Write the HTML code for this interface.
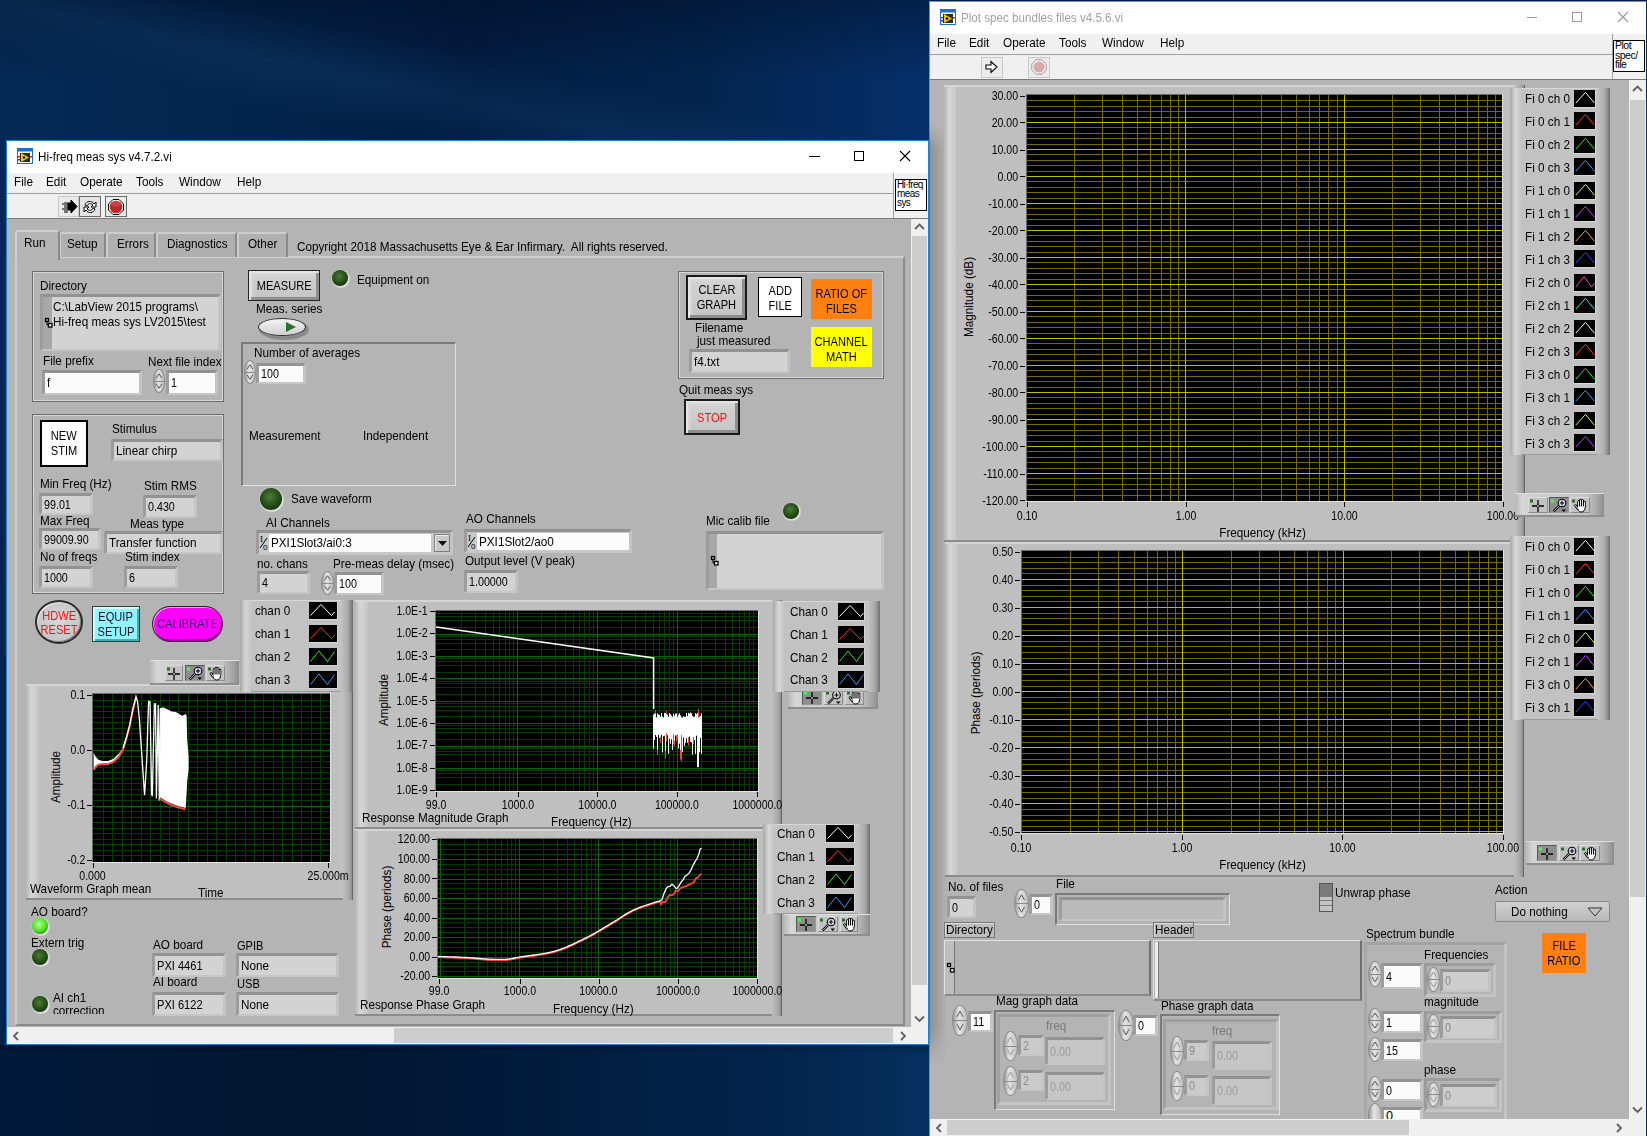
<!DOCTYPE html>
<html><head><meta charset="utf-8">
<style>
*{margin:0;padding:0;box-sizing:border-box}
html,body{width:1647px;height:1136px;overflow:hidden}
body{position:relative;font-family:"Liberation Sans",sans-serif;font-size:12px;color:#000;background:#022045}
.a{position:absolute}
.t{position:absolute;white-space:nowrap;line-height:14px;color:#000}
.num{position:absolute;background:#bcbcbc;border-style:solid;border-width:3px 3px 2px 3px;border-color:#929292 #c4c4c4 #c6c6c6 #9c9c9c}
</style></head><body>

<div class="a" style="left:0;top:0;width:1647px;height:1136px;background:#022148"></div>
<div class="a" style="left:0;top:0;width:930px;height:141px;background:linear-gradient(90deg,#042a56 0%,#03244c 30%,#021d42 50%,#03244e 75%,#05306a 100%)"></div>
<div class="a" style="left:0;top:0;width:930px;height:141px;background:linear-gradient(180deg,rgba(0,5,20,0.35) 0%,rgba(0,0,0,0) 55%)"></div>
<div class="a" style="left:0;top:0;width:930px;height:141px;background:linear-gradient(192deg,rgba(0,0,0,0) 45%,rgba(60,130,200,0.10) 59%,rgba(0,0,0,0) 73%)"></div>
<div class="a" style="left:0;top:141px;width:7px;height:904px;background:linear-gradient(180deg,#04285a,#02234a)"></div>
<div class="a" style="left:0;top:1045px;width:930px;height:91px;background:linear-gradient(90deg,#011a3a 0%,#011630 35%,#021c3e 60%,#03254e 85%,#05305f 100%)"></div>
<div class="a" style="left:0;top:1045px;width:930px;height:8px;background:linear-gradient(180deg,rgba(0,0,0,0.25),rgba(0,0,0,0))"></div>
<div class="a" style="left:929px;top:1px;width:718px;height:1135px;background:#f0f0f0;border-left:1px solid #8a8a8a;border-top:1px solid #8a8a8a"></div>
<div class="a" style="left:930px;top:2px;width:716px;height:32px;background:#fff"></div>
<div class="a" style="left:1646px;top:1px;width:1px;height:1135px;background:#0e2a4c"></div>
<svg class="a" style="left:940px;top:9px" width="16" height="16"><rect x="0.5" y="0.5" width="15" height="15" fill="#fff" stroke="#1a6fd0"/><rect x="0.5" y="0.5" width="15" height="3" fill="#1a6fd0"/><rect x="3" y="5" width="10" height="9" fill="#2a2a20"/><path d="M4,5 L12,9.5 L4,14 Z" fill="#f0d000"/><circle cx="7" cy="9.5" r="1.3" fill="#000"/><rect x="1" y="8" width="2" height="1.5" fill="#e02020"/><rect x="13" y="8" width="2" height="1.5" fill="#e02020"/><rect x="1" y="11" width="2" height="1.5" fill="#2040e0"/></svg>
<div class="t" style="left:961px;top:10.5px;font-size:12.5px;color:#a0a0a0;"><span style="display:inline-block;transform:scaleX(0.93);transform-origin:left">Plot spec bundles files v4.5.6.vi</span></div>
<div class="a" style="left:1527px;top:17px;width:10px;height:1px;background:#999"></div>
<div class="a" style="left:1572px;top:12px;width:10px;height:10px;border:1px solid #999"></div>
<svg class="a" style="left:1617px;top:11px" width="12" height="12"><path d="M1,1 L11,11 M11,1 L1,11" stroke="#999" stroke-width="1.1"/></svg>
<div class="a" style="left:930px;top:34px;width:716px;height:45px;background:#f0f0f0"></div>
<div class="t" style="left:937px;top:35.5px;font-size:12.8px;color:#000;"><span style="display:inline-block;transform:scaleX(0.92);transform-origin:left">File</span></div>
<div class="t" style="left:969px;top:35.5px;font-size:12.8px;color:#000;"><span style="display:inline-block;transform:scaleX(0.92);transform-origin:left">Edit</span></div>
<div class="t" style="left:1003px;top:35.5px;font-size:12.8px;color:#000;"><span style="display:inline-block;transform:scaleX(0.92);transform-origin:left">Operate</span></div>
<div class="t" style="left:1059px;top:35.5px;font-size:12.8px;color:#000;"><span style="display:inline-block;transform:scaleX(0.92);transform-origin:left">Tools</span></div>
<div class="t" style="left:1102px;top:35.5px;font-size:12.8px;color:#000;"><span style="display:inline-block;transform:scaleX(0.92);transform-origin:left">Window</span></div>
<div class="t" style="left:1160px;top:35.5px;font-size:12.8px;color:#000;"><span style="display:inline-block;transform:scaleX(0.92);transform-origin:left">Help</span></div>
<div class="a" style="left:930px;top:54px;width:682px;height:1px;background:#a0a0a0"></div>
<div class="a" style="left:1612px;top:34px;width:1px;height:45px;background:#a0a0a0"></div>
<div class="a" style="left:930px;top:79px;width:716px;height:1px;background:#7a7a7a"></div>
<div class="a" style="left:981px;top:57px;width:22px;height:21px;border:1px solid #c8c8c8;background:#ececec"></div>
<svg class="a" style="left:984px;top:59px" width="16" height="16"><path d="M2,6 H7 V2.5 L13,8 L7,13.5 V10 H2 Z" stroke="#000" stroke-width="1.1" fill="#fff"/></svg>
<div class="a" style="left:1028px;top:57px;width:22px;height:21px;border:1px solid #c8c8c8;background:#ececec"></div>
<svg class="a" style="left:1031px;top:59px" width="16" height="16"><path d="M5,0.8 H11 L15.2,5 V11 L11,15.2 H5 L0.8,11 V5 Z" fill="#f4f4f4" stroke="#9a9a9a"/><circle cx="8" cy="8" r="5.6" fill="#d8a8aa"/></svg>
<div class="a" style="left:1613px;top:40px;width:32px;height:32px;border:1px solid #000;background:#fff"></div>
<div class="a" style="left:1615px;top:41px;width:30px;font-family:Liberation Sans;font-size:10.5px;line-height:9.5px;letter-spacing:-0.5px;color:#000">Plot<br>spec/<br>file</div>
<div class="a" style="left:930px;top:80px;width:699px;height:1039px;background:#b4b4b4"></div>
<div class="a" style="left:1629px;top:80px;width:17px;height:1039px;background:#f0f0f0"></div>
<div class="a" style="left:1630px;top:100px;width:15px;height:797px;background:#cdcdcd"></div>
<svg class="a" style="left:1631px;top:84px" width="13" height="10"><path d="M2,7 L6.5,2.5 L11,7" stroke="#606060" stroke-width="1.8" fill="none"/></svg>
<svg class="a" style="left:1631px;top:1105px" width="13" height="10"><path d="M2,2.5 L6.5,7 L11,2.5" stroke="#606060" stroke-width="1.8" fill="none"/></svg>
<div class="a" style="left:930px;top:1119px;width:716px;height:17px;background:#f0f0f0"></div>
<div class="a" style="left:947px;top:1120px;width:462px;height:15px;background:#cdcdcd"></div>
<svg class="a" style="left:934px;top:1122px" width="10" height="12"><path d="M7,2 L3,6 L7,10" stroke="#606060" stroke-width="1.8" fill="none"/></svg>
<svg class="a" style="left:1614px;top:1122px" width="10" height="12"><path d="M3,2 L7,6 L3,10" stroke="#606060" stroke-width="1.8" fill="none"/></svg>
<div class="a" style="left:929px;top:125px;width:18px;height:940px;background:linear-gradient(90deg,rgba(0,0,0,0.22),rgba(0,0,0,0));-webkit-mask-image:linear-gradient(180deg,transparent 0,#000 25px,#000 calc(100% - 40px),transparent 100%)"></div>
<div class="a" style="left:944px;top:85px;width:581px;height:457px;background:#bfbfbf;border-top:2px solid #d4d4d4;border-bottom:2px solid #8c8c8c"></div>
<div class="a" style="left:944px;top:87px;width:13px;height:453px;background:linear-gradient(90deg,#b4b4b4,#d6d6d6 40%,#cdcdcd 75%,#c2c2c2 100%)"></div>
<div class="a" style="left:1515px;top:85px;width:10px;height:457px;background:linear-gradient(90deg,#bfbfbf,#a8a8a8 60%,#8e8e8e 90%,#3c3c3c 100%)"></div>
<svg class="a" style="left:1027px;top:95px" width="475" height="406" shape-rendering="crispEdges"><rect width="475" height="406" fill="#000"/><line x1="0" y1="5.5" x2="475" y2="5.5" stroke="#726c00"/><line x1="0" y1="11.5" x2="475" y2="11.5" stroke="#726c00"/><line x1="0" y1="16.5" x2="475" y2="16.5" stroke="#726c00"/><line x1="0" y1="22.5" x2="475" y2="22.5" stroke="#726c00"/><line x1="0" y1="32.5" x2="475" y2="32.5" stroke="#726c00"/><line x1="0" y1="38.5" x2="475" y2="38.5" stroke="#726c00"/><line x1="0" y1="43.5" x2="475" y2="43.5" stroke="#726c00"/><line x1="0" y1="49.5" x2="475" y2="49.5" stroke="#726c00"/><line x1="0" y1="59.5" x2="475" y2="59.5" stroke="#726c00"/><line x1="0" y1="65.5" x2="475" y2="65.5" stroke="#726c00"/><line x1="0" y1="70.5" x2="475" y2="70.5" stroke="#726c00"/><line x1="0" y1="76.5" x2="475" y2="76.5" stroke="#726c00"/><line x1="0" y1="86.5" x2="475" y2="86.5" stroke="#726c00"/><line x1="0" y1="92.5" x2="475" y2="92.5" stroke="#726c00"/><line x1="0" y1="97.5" x2="475" y2="97.5" stroke="#726c00"/><line x1="0" y1="103.5" x2="475" y2="103.5" stroke="#726c00"/><line x1="0" y1="113.5" x2="475" y2="113.5" stroke="#726c00"/><line x1="0" y1="119.5" x2="475" y2="119.5" stroke="#726c00"/><line x1="0" y1="124.5" x2="475" y2="124.5" stroke="#726c00"/><line x1="0" y1="130.5" x2="475" y2="130.5" stroke="#726c00"/><line x1="0" y1="140.5" x2="475" y2="140.5" stroke="#726c00"/><line x1="0" y1="146.5" x2="475" y2="146.5" stroke="#726c00"/><line x1="0" y1="151.5" x2="475" y2="151.5" stroke="#726c00"/><line x1="0" y1="157.5" x2="475" y2="157.5" stroke="#726c00"/><line x1="0" y1="167.5" x2="475" y2="167.5" stroke="#726c00"/><line x1="0" y1="173.5" x2="475" y2="173.5" stroke="#726c00"/><line x1="0" y1="178.5" x2="475" y2="178.5" stroke="#726c00"/><line x1="0" y1="184.5" x2="475" y2="184.5" stroke="#726c00"/><line x1="0" y1="194.5" x2="475" y2="194.5" stroke="#726c00"/><line x1="0" y1="200.5" x2="475" y2="200.5" stroke="#726c00"/><line x1="0" y1="205.5" x2="475" y2="205.5" stroke="#726c00"/><line x1="0" y1="211.5" x2="475" y2="211.5" stroke="#726c00"/><line x1="0" y1="221.5" x2="475" y2="221.5" stroke="#726c00"/><line x1="0" y1="227.5" x2="475" y2="227.5" stroke="#726c00"/><line x1="0" y1="232.5" x2="475" y2="232.5" stroke="#726c00"/><line x1="0" y1="238.5" x2="475" y2="238.5" stroke="#726c00"/><line x1="0" y1="248.5" x2="475" y2="248.5" stroke="#726c00"/><line x1="0" y1="254.5" x2="475" y2="254.5" stroke="#726c00"/><line x1="0" y1="259.5" x2="475" y2="259.5" stroke="#726c00"/><line x1="0" y1="265.5" x2="475" y2="265.5" stroke="#726c00"/><line x1="0" y1="275.5" x2="475" y2="275.5" stroke="#726c00"/><line x1="0" y1="281.5" x2="475" y2="281.5" stroke="#726c00"/><line x1="0" y1="286.5" x2="475" y2="286.5" stroke="#726c00"/><line x1="0" y1="292.5" x2="475" y2="292.5" stroke="#726c00"/><line x1="0" y1="302.5" x2="475" y2="302.5" stroke="#726c00"/><line x1="0" y1="308.5" x2="475" y2="308.5" stroke="#726c00"/><line x1="0" y1="313.5" x2="475" y2="313.5" stroke="#726c00"/><line x1="0" y1="319.5" x2="475" y2="319.5" stroke="#726c00"/><line x1="0" y1="329.5" x2="475" y2="329.5" stroke="#726c00"/><line x1="0" y1="335.5" x2="475" y2="335.5" stroke="#726c00"/><line x1="0" y1="340.5" x2="475" y2="340.5" stroke="#726c00"/><line x1="0" y1="346.5" x2="475" y2="346.5" stroke="#726c00"/><line x1="0" y1="356.5" x2="475" y2="356.5" stroke="#726c00"/><line x1="0" y1="362.5" x2="475" y2="362.5" stroke="#726c00"/><line x1="0" y1="367.5" x2="475" y2="367.5" stroke="#726c00"/><line x1="0" y1="373.5" x2="475" y2="373.5" stroke="#726c00"/><line x1="0" y1="383.5" x2="475" y2="383.5" stroke="#726c00"/><line x1="0" y1="389.5" x2="475" y2="389.5" stroke="#726c00"/><line x1="0" y1="394.5" x2="475" y2="394.5" stroke="#726c00"/><line x1="0" y1="400.5" x2="475" y2="400.5" stroke="#726c00"/><line x1="47.5" y1="0" x2="47.5" y2="406" stroke="#726c00"/><line x1="75.5" y1="0" x2="75.5" y2="406" stroke="#726c00"/><line x1="95.5" y1="0" x2="95.5" y2="406" stroke="#726c00"/><line x1="110.5" y1="0" x2="110.5" y2="406" stroke="#726c00"/><line x1="123.5" y1="0" x2="123.5" y2="406" stroke="#726c00"/><line x1="134.5" y1="0" x2="134.5" y2="406" stroke="#726c00"/><line x1="143.5" y1="0" x2="143.5" y2="406" stroke="#726c00"/><line x1="151.5" y1="0" x2="151.5" y2="406" stroke="#726c00"/><line x1="206.5" y1="0" x2="206.5" y2="406" stroke="#726c00"/><line x1="234.5" y1="0" x2="234.5" y2="406" stroke="#726c00"/><line x1="254.5" y1="0" x2="254.5" y2="406" stroke="#726c00"/><line x1="269.5" y1="0" x2="269.5" y2="406" stroke="#726c00"/><line x1="282.5" y1="0" x2="282.5" y2="406" stroke="#726c00"/><line x1="292.5" y1="0" x2="292.5" y2="406" stroke="#726c00"/><line x1="301.5" y1="0" x2="301.5" y2="406" stroke="#726c00"/><line x1="310.5" y1="0" x2="310.5" y2="406" stroke="#726c00"/><line x1="365.5" y1="0" x2="365.5" y2="406" stroke="#726c00"/><line x1="393.5" y1="0" x2="393.5" y2="406" stroke="#726c00"/><line x1="412.5" y1="0" x2="412.5" y2="406" stroke="#726c00"/><line x1="428.5" y1="0" x2="428.5" y2="406" stroke="#726c00"/><line x1="440.5" y1="0" x2="440.5" y2="406" stroke="#726c00"/><line x1="451.5" y1="0" x2="451.5" y2="406" stroke="#726c00"/><line x1="460.5" y1="0" x2="460.5" y2="406" stroke="#726c00"/><line x1="468.5" y1="0" x2="468.5" y2="406" stroke="#726c00"/><line x1="0" y1="27.5" x2="475" y2="27.5" stroke="#bebc00"/><line x1="0" y1="54.5" x2="475" y2="54.5" stroke="#bebc00"/><line x1="0" y1="81.5" x2="475" y2="81.5" stroke="#bebc00"/><line x1="0" y1="108.5" x2="475" y2="108.5" stroke="#bebc00"/><line x1="0" y1="135.5" x2="475" y2="135.5" stroke="#bebc00"/><line x1="0" y1="162.5" x2="475" y2="162.5" stroke="#bebc00"/><line x1="0" y1="189.5" x2="475" y2="189.5" stroke="#bebc00"/><line x1="0" y1="216.5" x2="475" y2="216.5" stroke="#bebc00"/><line x1="0" y1="243.5" x2="475" y2="243.5" stroke="#bebc00"/><line x1="0" y1="270.5" x2="475" y2="270.5" stroke="#bebc00"/><line x1="0" y1="297.5" x2="475" y2="297.5" stroke="#bebc00"/><line x1="0" y1="324.5" x2="475" y2="324.5" stroke="#bebc00"/><line x1="0" y1="351.5" x2="475" y2="351.5" stroke="#bebc00"/><line x1="0" y1="378.5" x2="475" y2="378.5" stroke="#bebc00"/><line x1="158.5" y1="0" x2="158.5" y2="406" stroke="#bebc00"/><line x1="317.5" y1="0" x2="317.5" y2="406" stroke="#bebc00"/></svg>
<div class="a" style="left:1026px;top:94px;width:476px;height:1px;background:#6a6a6a"></div>
<div class="a" style="left:1026px;top:94px;width:1px;height:407px;background:#6a6a6a"></div>
<div class="a" style="left:1026px;top:501px;width:477px;height:1px;background:#e4e4e4"></div>
<div class="a" style="left:1502px;top:94px;width:1px;height:408px;background:#e4e4e4"></div>
<div class="a" style="left:1020px;top:96px;width:5px;height:1px;background:#000"></div>
<div class="t" style="right:629px;top:88.5px;font-size:12.4px;color:#000;"><span style="display:inline-block;transform:scaleX(0.85);transform-origin:right">30.00</span></div>
<div class="a" style="left:1020px;top:122px;width:5px;height:1px;background:#000"></div>
<div class="t" style="right:629px;top:115.5px;font-size:12.4px;color:#000;"><span style="display:inline-block;transform:scaleX(0.85);transform-origin:right">20.00</span></div>
<div class="a" style="left:1020px;top:150px;width:5px;height:1px;background:#000"></div>
<div class="t" style="right:629px;top:142.5px;font-size:12.4px;color:#000;"><span style="display:inline-block;transform:scaleX(0.85);transform-origin:right">10.00</span></div>
<div class="a" style="left:1020px;top:176px;width:5px;height:1px;background:#000"></div>
<div class="t" style="right:629px;top:169.5px;font-size:12.4px;color:#000;"><span style="display:inline-block;transform:scaleX(0.85);transform-origin:right">0.00</span></div>
<div class="a" style="left:1020px;top:204px;width:5px;height:1px;background:#000"></div>
<div class="t" style="right:629px;top:196.5px;font-size:12.4px;color:#000;"><span style="display:inline-block;transform:scaleX(0.85);transform-origin:right">-10.00</span></div>
<div class="a" style="left:1020px;top:230px;width:5px;height:1px;background:#000"></div>
<div class="t" style="right:629px;top:223.5px;font-size:12.4px;color:#000;"><span style="display:inline-block;transform:scaleX(0.85);transform-origin:right">-20.00</span></div>
<div class="a" style="left:1020px;top:258px;width:5px;height:1px;background:#000"></div>
<div class="t" style="right:629px;top:250.5px;font-size:12.4px;color:#000;"><span style="display:inline-block;transform:scaleX(0.85);transform-origin:right">-30.00</span></div>
<div class="a" style="left:1020px;top:284px;width:5px;height:1px;background:#000"></div>
<div class="t" style="right:629px;top:277.5px;font-size:12.4px;color:#000;"><span style="display:inline-block;transform:scaleX(0.85);transform-origin:right">-40.00</span></div>
<div class="a" style="left:1020px;top:312px;width:5px;height:1px;background:#000"></div>
<div class="t" style="right:629px;top:304.5px;font-size:12.4px;color:#000;"><span style="display:inline-block;transform:scaleX(0.85);transform-origin:right">-50.00</span></div>
<div class="a" style="left:1020px;top:338px;width:5px;height:1px;background:#000"></div>
<div class="t" style="right:629px;top:331.5px;font-size:12.4px;color:#000;"><span style="display:inline-block;transform:scaleX(0.85);transform-origin:right">-60.00</span></div>
<div class="a" style="left:1020px;top:366px;width:5px;height:1px;background:#000"></div>
<div class="t" style="right:629px;top:358.5px;font-size:12.4px;color:#000;"><span style="display:inline-block;transform:scaleX(0.85);transform-origin:right">-70.00</span></div>
<div class="a" style="left:1020px;top:392px;width:5px;height:1px;background:#000"></div>
<div class="t" style="right:629px;top:385.5px;font-size:12.4px;color:#000;"><span style="display:inline-block;transform:scaleX(0.85);transform-origin:right">-80.00</span></div>
<div class="a" style="left:1020px;top:420px;width:5px;height:1px;background:#000"></div>
<div class="t" style="right:629px;top:412.5px;font-size:12.4px;color:#000;"><span style="display:inline-block;transform:scaleX(0.85);transform-origin:right">-90.00</span></div>
<div class="a" style="left:1020px;top:446px;width:5px;height:1px;background:#000"></div>
<div class="t" style="right:629px;top:439.5px;font-size:12.4px;color:#000;"><span style="display:inline-block;transform:scaleX(0.85);transform-origin:right">-100.00</span></div>
<div class="a" style="left:1020px;top:474px;width:5px;height:1px;background:#000"></div>
<div class="t" style="right:629px;top:466.5px;font-size:12.4px;color:#000;"><span style="display:inline-block;transform:scaleX(0.85);transform-origin:right">-110.00</span></div>
<div class="a" style="left:1020px;top:500px;width:5px;height:1px;background:#000"></div>
<div class="t" style="right:629px;top:493.5px;font-size:12.4px;color:#000;"><span style="display:inline-block;transform:scaleX(0.85);transform-origin:right">-120.00</span></div>
<div class="a" style="left:1027px;top:502px;width:1px;height:5px;background:#000"></div>
<div class="t" style="left:827.0px;width:400px;text-align:center;top:509.0px;font-size:12.4px;color:#000;"><span style="display:inline-block;transform:scaleX(0.85);transform-origin:center">0.10</span></div>
<div class="a" style="left:1186px;top:502px;width:1px;height:5px;background:#000"></div>
<div class="t" style="left:985.6666666666667px;width:400px;text-align:center;top:509.0px;font-size:12.4px;color:#000;"><span style="display:inline-block;transform:scaleX(0.85);transform-origin:center">1.00</span></div>
<div class="a" style="left:1344px;top:502px;width:1px;height:5px;background:#000"></div>
<div class="t" style="left:1144.3333333333333px;width:400px;text-align:center;top:509.0px;font-size:12.4px;color:#000;"><span style="display:inline-block;transform:scaleX(0.85);transform-origin:center">10.00</span></div>
<div class="a" style="left:1503px;top:502px;width:1px;height:5px;background:#000"></div>
<div class="t" style="left:1303.0px;width:400px;text-align:center;top:509.0px;font-size:12.4px;color:#000;"><span style="display:inline-block;transform:scaleX(0.85);transform-origin:center">100.00</span></div>
<div class="t" style="left:869px;top:290px;width:200px;text-align:center;font-size:12.6px;transform:rotate(-90deg) scaleX(0.93)">Magnitude (dB)</div>
<div class="t" style="left:1063px;width:400px;text-align:center;top:525.5px;font-size:12.6px;color:#000;"><span style="display:inline-block;transform:scaleX(0.93);transform-origin:center">Frequency (kHz)</span></div>
<div class="a" style="left:1510px;top:88px;width:100px;height:367px;background:#c2c2c2;border-top:1px solid #d8d8d8;border-bottom:1px solid #9a9a9a"></div>
<div class="a" style="left:1510px;top:88px;width:11px;height:367px;background:linear-gradient(90deg,#a8a8a8,#d6d6d6 50%,#c6c6c6)"></div>
<div class="a" style="left:1598px;top:88px;width:12px;height:367px;background:linear-gradient(90deg,#c2c2c2,#aaaaaa 55%,#8c8c8c 80%,#6e6e6e)"></div>
<div class="t" style="left:1525px;top:91.5px;font-size:12.6px;color:#000;"><span style="display:inline-block;transform:scaleX(0.93);transform-origin:left">Fi 0 ch 0</span></div>
<svg class="a" style="left:1574px;top:90px" width="22" height="18"><rect width="22" height="18" fill="#000"/><rect x="0" y="17" width="22" height="1" fill="#d8d8d8"/><rect x="21" y="0" width="1" height="18" fill="#d8d8d8"/><path d="M1.8,13.1 L11.5,2.4 L20.4,13.1" stroke="#fff" stroke-width="1" fill="none"/></svg>
<div class="t" style="left:1525px;top:114.5px;font-size:12.6px;color:#000;"><span style="display:inline-block;transform:scaleX(0.93);transform-origin:left">Fi 0 ch 1</span></div>
<svg class="a" style="left:1574px;top:112px" width="22" height="18"><rect width="22" height="18" fill="#000"/><rect x="0" y="17" width="22" height="1" fill="#d8d8d8"/><rect x="21" y="0" width="1" height="18" fill="#d8d8d8"/><path d="M1.8,13.1 L11.5,2.4 L20.4,13.1" stroke="#ff3030" stroke-width="1" fill="none"/></svg>
<div class="t" style="left:1525px;top:137.5px;font-size:12.6px;color:#000;"><span style="display:inline-block;transform:scaleX(0.93);transform-origin:left">Fi 0 ch 2</span></div>
<svg class="a" style="left:1574px;top:136px" width="22" height="18"><rect width="22" height="18" fill="#000"/><rect x="0" y="17" width="22" height="1" fill="#d8d8d8"/><rect x="21" y="0" width="1" height="18" fill="#d8d8d8"/><path d="M1.8,13.1 L11.5,2.4 L20.4,13.1" stroke="#20f020" stroke-width="1" fill="none"/></svg>
<div class="t" style="left:1525px;top:160.5px;font-size:12.6px;color:#000;"><span style="display:inline-block;transform:scaleX(0.93);transform-origin:left">Fi 0 ch 3</span></div>
<svg class="a" style="left:1574px;top:158px" width="22" height="18"><rect width="22" height="18" fill="#000"/><rect x="0" y="17" width="22" height="1" fill="#d8d8d8"/><rect x="21" y="0" width="1" height="18" fill="#d8d8d8"/><path d="M1.8,13.1 L11.5,2.4 L20.4,13.1" stroke="#30a0ff" stroke-width="1" fill="none"/></svg>
<div class="t" style="left:1525px;top:183.5px;font-size:12.6px;color:#000;"><span style="display:inline-block;transform:scaleX(0.93);transform-origin:left">Fi 1 ch 0</span></div>
<svg class="a" style="left:1574px;top:182px" width="22" height="18"><rect width="22" height="18" fill="#000"/><rect x="0" y="17" width="22" height="1" fill="#d8d8d8"/><rect x="21" y="0" width="1" height="18" fill="#d8d8d8"/><path d="M1.8,13.1 L11.5,2.4 L20.4,13.1" stroke="#c8ff40" stroke-width="1" fill="none"/></svg>
<div class="t" style="left:1525px;top:206.5px;font-size:12.6px;color:#000;"><span style="display:inline-block;transform:scaleX(0.93);transform-origin:left">Fi 1 ch 1</span></div>
<svg class="a" style="left:1574px;top:204px" width="22" height="18"><rect width="22" height="18" fill="#000"/><rect x="0" y="17" width="22" height="1" fill="#d8d8d8"/><rect x="21" y="0" width="1" height="18" fill="#d8d8d8"/><path d="M1.8,13.1 L11.5,2.4 L20.4,13.1" stroke="#c040ff" stroke-width="1" fill="none"/></svg>
<div class="t" style="left:1525px;top:229.5px;font-size:12.6px;color:#000;"><span style="display:inline-block;transform:scaleX(0.93);transform-origin:left">Fi 1 ch 2</span></div>
<svg class="a" style="left:1574px;top:228px" width="22" height="18"><rect width="22" height="18" fill="#000"/><rect x="0" y="17" width="22" height="1" fill="#d8d8d8"/><rect x="21" y="0" width="1" height="18" fill="#d8d8d8"/><path d="M1.8,13.1 L11.5,2.4 L20.4,13.1" stroke="#ffa020" stroke-width="1" fill="none"/></svg>
<div class="t" style="left:1525px;top:252.5px;font-size:12.6px;color:#000;"><span style="display:inline-block;transform:scaleX(0.93);transform-origin:left">Fi 1 ch 3</span></div>
<svg class="a" style="left:1574px;top:250px" width="22" height="18"><rect width="22" height="18" fill="#000"/><rect x="0" y="17" width="22" height="1" fill="#d8d8d8"/><rect x="21" y="0" width="1" height="18" fill="#d8d8d8"/><path d="M1.8,13.1 L11.5,2.4 L20.4,13.1" stroke="#3040ff" stroke-width="1" fill="none"/></svg>
<div class="t" style="left:1525px;top:275.5px;font-size:12.6px;color:#000;"><span style="display:inline-block;transform:scaleX(0.93);transform-origin:left">Fi 2 ch 0</span></div>
<svg class="a" style="left:1574px;top:274px" width="22" height="18"><rect width="22" height="18" fill="#000"/><rect x="0" y="17" width="22" height="1" fill="#d8d8d8"/><rect x="21" y="0" width="1" height="18" fill="#d8d8d8"/><path d="M1.8,13 L10,2.5 L17.5,13 L20.5,9" stroke="#ff30c0" stroke-width="1" fill="none"/></svg>
<div class="t" style="left:1525px;top:298.5px;font-size:12.6px;color:#000;"><span style="display:inline-block;transform:scaleX(0.93);transform-origin:left">Fi 2 ch 1</span></div>
<svg class="a" style="left:1574px;top:296px" width="22" height="18"><rect width="22" height="18" fill="#000"/><rect x="0" y="17" width="22" height="1" fill="#d8d8d8"/><rect x="21" y="0" width="1" height="18" fill="#d8d8d8"/><path d="M1.8,13.1 L11.5,2.4 L20.4,13.1" stroke="#30f0f0" stroke-width="1" fill="none"/></svg>
<div class="t" style="left:1525px;top:321.5px;font-size:12.6px;color:#000;"><span style="display:inline-block;transform:scaleX(0.93);transform-origin:left">Fi 2 ch 2</span></div>
<svg class="a" style="left:1574px;top:320px" width="22" height="18"><rect width="22" height="18" fill="#000"/><rect x="0" y="17" width="22" height="1" fill="#d8d8d8"/><rect x="21" y="0" width="1" height="18" fill="#d8d8d8"/><path d="M1.8,13.1 L11.5,2.4 L20.4,13.1" stroke="#fff" stroke-width="1" fill="none"/></svg>
<div class="t" style="left:1525px;top:344.5px;font-size:12.6px;color:#000;"><span style="display:inline-block;transform:scaleX(0.93);transform-origin:left">Fi 2 ch 3</span></div>
<svg class="a" style="left:1574px;top:342px" width="22" height="18"><rect width="22" height="18" fill="#000"/><rect x="0" y="17" width="22" height="1" fill="#d8d8d8"/><rect x="21" y="0" width="1" height="18" fill="#d8d8d8"/><path d="M1.8,13.1 L11.5,2.4 L20.4,13.1" stroke="#ff3030" stroke-width="1" fill="none"/></svg>
<div class="t" style="left:1525px;top:367.5px;font-size:12.6px;color:#000;"><span style="display:inline-block;transform:scaleX(0.93);transform-origin:left">Fi 3 ch 0</span></div>
<svg class="a" style="left:1574px;top:366px" width="22" height="18"><rect width="22" height="18" fill="#000"/><rect x="0" y="17" width="22" height="1" fill="#d8d8d8"/><rect x="21" y="0" width="1" height="18" fill="#d8d8d8"/><path d="M1.8,13.1 L11.5,2.4 L20.4,13.1" stroke="#20f020" stroke-width="1" fill="none"/></svg>
<div class="t" style="left:1525px;top:390.5px;font-size:12.6px;color:#000;"><span style="display:inline-block;transform:scaleX(0.93);transform-origin:left">Fi 3 ch 1</span></div>
<svg class="a" style="left:1574px;top:388px" width="22" height="18"><rect width="22" height="18" fill="#000"/><rect x="0" y="17" width="22" height="1" fill="#d8d8d8"/><rect x="21" y="0" width="1" height="18" fill="#d8d8d8"/><path d="M1.8,13.1 L11.5,2.4 L20.4,13.1" stroke="#30a0ff" stroke-width="1" fill="none"/></svg>
<div class="t" style="left:1525px;top:413.5px;font-size:12.6px;color:#000;"><span style="display:inline-block;transform:scaleX(0.93);transform-origin:left">Fi 3 ch 2</span></div>
<svg class="a" style="left:1574px;top:412px" width="22" height="18"><rect width="22" height="18" fill="#000"/><rect x="0" y="17" width="22" height="1" fill="#d8d8d8"/><rect x="21" y="0" width="1" height="18" fill="#d8d8d8"/><path d="M1.8,13.1 L11.5,2.4 L20.4,13.1" stroke="#c8ff40" stroke-width="1" fill="none"/></svg>
<div class="t" style="left:1525px;top:436.5px;font-size:12.6px;color:#000;"><span style="display:inline-block;transform:scaleX(0.93);transform-origin:left">Fi 3 ch 3</span></div>
<svg class="a" style="left:1574px;top:434px" width="22" height="18"><rect width="22" height="18" fill="#000"/><rect x="0" y="17" width="22" height="1" fill="#d8d8d8"/><rect x="21" y="0" width="1" height="18" fill="#d8d8d8"/><path d="M1.8,13.1 L11.5,2.4 L20.4,13.1" stroke="#c040ff" stroke-width="1" fill="none"/></svg>
<div class="a" style="left:1515px;top:493px;width:89px;height:24px;background:linear-gradient(90deg,#b8b8b8 0%,#d6d6d6 8%,#cfcfcf 18%,#c4c4c4 80%,#a8a8a8 92%,#8c8c8c 100%);border-top:1px solid #dedede;border-bottom:2px solid #8e8e8e"></div>
<div class="a" style="left:1528px;top:497px;width:20px;height:16px;background:#c2c2c2;border:1px solid;border-color:#dcdcdc #8a8a8a #8a8a8a #dcdcdc"></div>
<svg class="a" style="left:1528px;top:497px" width="20" height="16"><rect x="2" y="2.5" width="3" height="3" fill="#2a6a2a"/><path d="M4.0,9.0 H16.0 M10.0,3.0 V15.0" stroke="#000" stroke-width="1.3"/><circle cx="10.0" cy="9.0" r="1.4" fill="#fff" stroke="#000" stroke-width="0.9"/></svg>
<div class="a" style="left:1549px;top:497px;width:20px;height:16px;background:#8e8e8e;border:1px solid;border-color:#5a5a5a #9a9a9a #9a9a9a #5a5a5a"></div>
<svg class="a" style="left:1549px;top:497px" width="20" height="16"><rect x="2" y="2.5" width="3" height="3" fill="#40ff40"/><circle cx="13.0" cy="6.0" r="3.8" fill="#dcdcf4" stroke="#000" stroke-width="1.1"/><path d="M13.0,3.8 V8.2 M10.8,6.0 H15.2" stroke="#000" stroke-width="1.1"/><path d="M10.0,9.0 L4.5,14.5" stroke="#000" stroke-width="2.4"/><path d="M10.0,9.0 L4.5,14.5" stroke="#ddd" stroke-width="0.8"/><path d="M12.5,12.5 H17.0 L14.75,15.0Z" fill="#000"/></svg>
<div class="a" style="left:1570px;top:497px;width:20px;height:16px;background:#c2c2c2;border:1px solid;border-color:#dcdcdc #8a8a8a #8a8a8a #dcdcdc"></div>
<svg class="a" style="left:1570px;top:497px" width="20" height="16"><rect x="2" y="2.5" width="3" height="3" fill="#2a6a2a"/><g transform="translate(3.5,0.5)" stroke-linecap="round"><path d="M5,9 V4 M7,8.5 V2.6 M9,8.5 V3 M11,9 V4.6 M4.2,11 L2,8" stroke="#000" stroke-width="2.6" fill="none"/><path d="M4,9 Q4,14.5 7.5,14.5 Q11.5,14.5 11.5,10 V8.5 H4Z" fill="#fff" stroke="#000" stroke-width="1"/><path d="M5,9.5 V4 M7,9.5 V2.6 M9,9.5 V3 M11,9.5 V4.6 M4.2,11 L2,8" stroke="#fff" stroke-width="0.9" fill="none"/></g></svg>
<div class="a" style="left:945px;top:542px;width:579px;height:335px;background:#bfbfbf;border-top:2px solid #d4d4d4;border-bottom:2px solid #8c8c8c"></div>
<div class="a" style="left:945px;top:544px;width:13px;height:331px;background:linear-gradient(90deg,#b4b4b4,#d6d6d6 40%,#cdcdcd 75%,#c2c2c2 100%)"></div>
<div class="a" style="left:1514px;top:542px;width:10px;height:335px;background:linear-gradient(90deg,#bfbfbf,#a8a8a8 60%,#8e8e8e 90%,#3c3c3c 100%)"></div>
<svg class="a" style="left:1022px;top:551px" width="481" height="282" shape-rendering="crispEdges"><rect width="481" height="282" fill="#000"/><line x1="0" y1="6.5" x2="481" y2="6.5" stroke="#726c00"/><line x1="0" y1="11.5" x2="481" y2="11.5" stroke="#726c00"/><line x1="0" y1="17.5" x2="481" y2="17.5" stroke="#726c00"/><line x1="0" y1="22.5" x2="481" y2="22.5" stroke="#726c00"/><line x1="0" y1="34.5" x2="481" y2="34.5" stroke="#726c00"/><line x1="0" y1="39.5" x2="481" y2="39.5" stroke="#726c00"/><line x1="0" y1="45.5" x2="481" y2="45.5" stroke="#726c00"/><line x1="0" y1="50.5" x2="481" y2="50.5" stroke="#726c00"/><line x1="0" y1="62.5" x2="481" y2="62.5" stroke="#726c00"/><line x1="0" y1="67.5" x2="481" y2="67.5" stroke="#726c00"/><line x1="0" y1="73.5" x2="481" y2="73.5" stroke="#726c00"/><line x1="0" y1="79.5" x2="481" y2="79.5" stroke="#726c00"/><line x1="0" y1="90.5" x2="481" y2="90.5" stroke="#726c00"/><line x1="0" y1="95.5" x2="481" y2="95.5" stroke="#726c00"/><line x1="0" y1="101.5" x2="481" y2="101.5" stroke="#726c00"/><line x1="0" y1="107.5" x2="481" y2="107.5" stroke="#726c00"/><line x1="0" y1="118.5" x2="481" y2="118.5" stroke="#726c00"/><line x1="0" y1="123.5" x2="481" y2="123.5" stroke="#726c00"/><line x1="0" y1="129.5" x2="481" y2="129.5" stroke="#726c00"/><line x1="0" y1="135.5" x2="481" y2="135.5" stroke="#726c00"/><line x1="0" y1="146.5" x2="481" y2="146.5" stroke="#726c00"/><line x1="0" y1="151.5" x2="481" y2="151.5" stroke="#726c00"/><line x1="0" y1="157.5" x2="481" y2="157.5" stroke="#726c00"/><line x1="0" y1="163.5" x2="481" y2="163.5" stroke="#726c00"/><line x1="0" y1="174.5" x2="481" y2="174.5" stroke="#726c00"/><line x1="0" y1="180.5" x2="481" y2="180.5" stroke="#726c00"/><line x1="0" y1="185.5" x2="481" y2="185.5" stroke="#726c00"/><line x1="0" y1="191.5" x2="481" y2="191.5" stroke="#726c00"/><line x1="0" y1="202.5" x2="481" y2="202.5" stroke="#726c00"/><line x1="0" y1="208.5" x2="481" y2="208.5" stroke="#726c00"/><line x1="0" y1="213.5" x2="481" y2="213.5" stroke="#726c00"/><line x1="0" y1="219.5" x2="481" y2="219.5" stroke="#726c00"/><line x1="0" y1="230.5" x2="481" y2="230.5" stroke="#726c00"/><line x1="0" y1="236.5" x2="481" y2="236.5" stroke="#726c00"/><line x1="0" y1="241.5" x2="481" y2="241.5" stroke="#726c00"/><line x1="0" y1="247.5" x2="481" y2="247.5" stroke="#726c00"/><line x1="0" y1="258.5" x2="481" y2="258.5" stroke="#726c00"/><line x1="0" y1="264.5" x2="481" y2="264.5" stroke="#726c00"/><line x1="0" y1="269.5" x2="481" y2="269.5" stroke="#726c00"/><line x1="0" y1="275.5" x2="481" y2="275.5" stroke="#726c00"/><line x1="48.5" y1="0" x2="48.5" y2="282" stroke="#726c00"/><line x1="76.5" y1="0" x2="76.5" y2="282" stroke="#726c00"/><line x1="96.5" y1="0" x2="96.5" y2="282" stroke="#726c00"/><line x1="112.5" y1="0" x2="112.5" y2="282" stroke="#726c00"/><line x1="125.5" y1="0" x2="125.5" y2="282" stroke="#726c00"/><line x1="135.5" y1="0" x2="135.5" y2="282" stroke="#726c00"/><line x1="145.5" y1="0" x2="145.5" y2="282" stroke="#726c00"/><line x1="153.5" y1="0" x2="153.5" y2="282" stroke="#726c00"/><line x1="209.5" y1="0" x2="209.5" y2="282" stroke="#726c00"/><line x1="237.5" y1="0" x2="237.5" y2="282" stroke="#726c00"/><line x1="257.5" y1="0" x2="257.5" y2="282" stroke="#726c00"/><line x1="272.5" y1="0" x2="272.5" y2="282" stroke="#726c00"/><line x1="285.5" y1="0" x2="285.5" y2="282" stroke="#726c00"/><line x1="296.5" y1="0" x2="296.5" y2="282" stroke="#726c00"/><line x1="305.5" y1="0" x2="305.5" y2="282" stroke="#726c00"/><line x1="313.5" y1="0" x2="313.5" y2="282" stroke="#726c00"/><line x1="369.5" y1="0" x2="369.5" y2="282" stroke="#726c00"/><line x1="397.5" y1="0" x2="397.5" y2="282" stroke="#726c00"/><line x1="418.5" y1="0" x2="418.5" y2="282" stroke="#726c00"/><line x1="433.5" y1="0" x2="433.5" y2="282" stroke="#726c00"/><line x1="446.5" y1="0" x2="446.5" y2="282" stroke="#726c00"/><line x1="457.5" y1="0" x2="457.5" y2="282" stroke="#726c00"/><line x1="466.5" y1="0" x2="466.5" y2="282" stroke="#726c00"/><line x1="474.5" y1="0" x2="474.5" y2="282" stroke="#726c00"/><line x1="0" y1="28.5" x2="481" y2="28.5" stroke="#bebc00"/><line x1="0" y1="56.5" x2="481" y2="56.5" stroke="#bebc00"/><line x1="0" y1="84.5" x2="481" y2="84.5" stroke="#bebc00"/><line x1="0" y1="112.5" x2="481" y2="112.5" stroke="#bebc00"/><line x1="0" y1="140.5" x2="481" y2="140.5" stroke="#bebc00"/><line x1="0" y1="168.5" x2="481" y2="168.5" stroke="#bebc00"/><line x1="0" y1="196.5" x2="481" y2="196.5" stroke="#bebc00"/><line x1="0" y1="224.5" x2="481" y2="224.5" stroke="#bebc00"/><line x1="0" y1="252.5" x2="481" y2="252.5" stroke="#bebc00"/><line x1="0" y1="280.5" x2="481" y2="280.5" stroke="#bebc00"/><line x1="160.5" y1="0" x2="160.5" y2="282" stroke="#bebc00"/><line x1="321.5" y1="0" x2="321.5" y2="282" stroke="#bebc00"/></svg>
<div class="a" style="left:1021px;top:550px;width:482px;height:1px;background:#6a6a6a"></div>
<div class="a" style="left:1021px;top:550px;width:1px;height:283px;background:#6a6a6a"></div>
<div class="a" style="left:1021px;top:833px;width:483px;height:1px;background:#e4e4e4"></div>
<div class="a" style="left:1503px;top:550px;width:1px;height:284px;background:#e4e4e4"></div>
<div class="a" style="left:1015px;top:552px;width:5px;height:1px;background:#000"></div>
<div class="t" style="right:634px;top:544.5px;font-size:12.4px;color:#000;"><span style="display:inline-block;transform:scaleX(0.85);transform-origin:right">0.50</span></div>
<div class="a" style="left:1015px;top:580px;width:5px;height:1px;background:#000"></div>
<div class="t" style="right:634px;top:572.55px;font-size:12.4px;color:#000;"><span style="display:inline-block;transform:scaleX(0.85);transform-origin:right">0.40</span></div>
<div class="a" style="left:1015px;top:608px;width:5px;height:1px;background:#000"></div>
<div class="t" style="right:634px;top:600.6px;font-size:12.4px;color:#000;"><span style="display:inline-block;transform:scaleX(0.85);transform-origin:right">0.30</span></div>
<div class="a" style="left:1015px;top:636px;width:5px;height:1px;background:#000"></div>
<div class="t" style="right:634px;top:628.65px;font-size:12.4px;color:#000;"><span style="display:inline-block;transform:scaleX(0.85);transform-origin:right">0.20</span></div>
<div class="a" style="left:1015px;top:664px;width:5px;height:1px;background:#000"></div>
<div class="t" style="right:634px;top:656.7px;font-size:12.4px;color:#000;"><span style="display:inline-block;transform:scaleX(0.85);transform-origin:right">0.10</span></div>
<div class="a" style="left:1015px;top:692px;width:5px;height:1px;background:#000"></div>
<div class="t" style="right:634px;top:684.75px;font-size:12.4px;color:#000;"><span style="display:inline-block;transform:scaleX(0.85);transform-origin:right">0.00</span></div>
<div class="a" style="left:1015px;top:720px;width:5px;height:1px;background:#000"></div>
<div class="t" style="right:634px;top:712.8px;font-size:12.4px;color:#000;"><span style="display:inline-block;transform:scaleX(0.85);transform-origin:right">-0.10</span></div>
<div class="a" style="left:1015px;top:748px;width:5px;height:1px;background:#000"></div>
<div class="t" style="right:634px;top:740.85px;font-size:12.4px;color:#000;"><span style="display:inline-block;transform:scaleX(0.85);transform-origin:right">-0.20</span></div>
<div class="a" style="left:1015px;top:776px;width:5px;height:1px;background:#000"></div>
<div class="t" style="right:634px;top:768.9px;font-size:12.4px;color:#000;"><span style="display:inline-block;transform:scaleX(0.85);transform-origin:right">-0.30</span></div>
<div class="a" style="left:1015px;top:804px;width:5px;height:1px;background:#000"></div>
<div class="t" style="right:634px;top:796.95px;font-size:12.4px;color:#000;"><span style="display:inline-block;transform:scaleX(0.85);transform-origin:right">-0.40</span></div>
<div class="a" style="left:1015px;top:832px;width:5px;height:1px;background:#000"></div>
<div class="t" style="right:634px;top:825.0px;font-size:12.4px;color:#000;"><span style="display:inline-block;transform:scaleX(0.85);transform-origin:right">-0.50</span></div>
<div class="a" style="left:1021px;top:835px;width:1px;height:5px;background:#000"></div>
<div class="t" style="left:821.0px;width:400px;text-align:center;top:840.5px;font-size:12.4px;color:#000;"><span style="display:inline-block;transform:scaleX(0.85);transform-origin:center">0.10</span></div>
<div class="a" style="left:1182px;top:835px;width:1px;height:5px;background:#000"></div>
<div class="t" style="left:981.6666666666667px;width:400px;text-align:center;top:840.5px;font-size:12.4px;color:#000;"><span style="display:inline-block;transform:scaleX(0.85);transform-origin:center">1.00</span></div>
<div class="a" style="left:1342px;top:835px;width:1px;height:5px;background:#000"></div>
<div class="t" style="left:1142.3333333333333px;width:400px;text-align:center;top:840.5px;font-size:12.4px;color:#000;"><span style="display:inline-block;transform:scaleX(0.85);transform-origin:center">10.00</span></div>
<div class="a" style="left:1503px;top:835px;width:1px;height:5px;background:#000"></div>
<div class="t" style="left:1303.0px;width:400px;text-align:center;top:840.5px;font-size:12.4px;color:#000;"><span style="display:inline-block;transform:scaleX(0.85);transform-origin:center">100.00</span></div>
<div class="t" style="left:876px;top:686px;width:200px;text-align:center;font-size:12.6px;transform:rotate(-90deg) scaleX(0.93)">Phase (periods)</div>
<div class="t" style="left:1063px;width:400px;text-align:center;top:858.0px;font-size:12.6px;color:#000;"><span style="display:inline-block;transform:scaleX(0.93);transform-origin:center">Frequency (kHz)</span></div>
<div class="a" style="left:1510px;top:536px;width:100px;height:184px;background:#c2c2c2;border-top:1px solid #d8d8d8;border-bottom:1px solid #9a9a9a"></div>
<div class="a" style="left:1510px;top:536px;width:11px;height:184px;background:linear-gradient(90deg,#a8a8a8,#d6d6d6 50%,#c6c6c6)"></div>
<div class="a" style="left:1598px;top:536px;width:12px;height:184px;background:linear-gradient(90deg,#c2c2c2,#aaaaaa 55%,#8c8c8c 80%,#6e6e6e)"></div>
<div class="t" style="left:1525px;top:540.0px;font-size:12.6px;color:#000;"><span style="display:inline-block;transform:scaleX(0.93);transform-origin:left">Fi 0 ch 0</span></div>
<svg class="a" style="left:1574px;top:538px" width="21" height="18"><rect width="21" height="18" fill="#000"/><rect x="0" y="17" width="21" height="1" fill="#d8d8d8"/><rect x="20" y="0" width="1" height="18" fill="#d8d8d8"/><path d="M1.8,13.1 L11.5,2.4 L20.4,13.1" stroke="#fff" stroke-width="1" fill="none"/></svg>
<div class="t" style="left:1525px;top:563.0px;font-size:12.6px;color:#000;"><span style="display:inline-block;transform:scaleX(0.93);transform-origin:left">Fi 0 ch 1</span></div>
<svg class="a" style="left:1574px;top:561px" width="21" height="18"><rect width="21" height="18" fill="#000"/><rect x="0" y="17" width="21" height="1" fill="#d8d8d8"/><rect x="20" y="0" width="1" height="18" fill="#d8d8d8"/><path d="M1.8,13.1 L11.5,2.4 L20.4,13.1" stroke="#ff3030" stroke-width="1" fill="none"/></svg>
<div class="t" style="left:1525px;top:586.0px;font-size:12.6px;color:#000;"><span style="display:inline-block;transform:scaleX(0.93);transform-origin:left">Fi 1 ch 0</span></div>
<svg class="a" style="left:1574px;top:584px" width="21" height="18"><rect width="21" height="18" fill="#000"/><rect x="0" y="17" width="21" height="1" fill="#d8d8d8"/><rect x="20" y="0" width="1" height="18" fill="#d8d8d8"/><path d="M1.8,13.1 L11.5,2.4 L20.4,13.1" stroke="#20f020" stroke-width="1" fill="none"/></svg>
<div class="t" style="left:1525px;top:609.0px;font-size:12.6px;color:#000;"><span style="display:inline-block;transform:scaleX(0.93);transform-origin:left">Fi 1 ch 1</span></div>
<svg class="a" style="left:1574px;top:607px" width="21" height="18"><rect width="21" height="18" fill="#000"/><rect x="0" y="17" width="21" height="1" fill="#d8d8d8"/><rect x="20" y="0" width="1" height="18" fill="#d8d8d8"/><path d="M1.8,13.1 L11.5,2.4 L20.4,13.1" stroke="#30a0ff" stroke-width="1" fill="none"/></svg>
<div class="t" style="left:1525px;top:632.0px;font-size:12.6px;color:#000;"><span style="display:inline-block;transform:scaleX(0.93);transform-origin:left">Fi 2 ch 0</span></div>
<svg class="a" style="left:1574px;top:630px" width="21" height="18"><rect width="21" height="18" fill="#000"/><rect x="0" y="17" width="21" height="1" fill="#d8d8d8"/><rect x="20" y="0" width="1" height="18" fill="#d8d8d8"/><path d="M1.8,13.1 L11.5,2.4 L20.4,13.1" stroke="#c8ff40" stroke-width="1" fill="none"/></svg>
<div class="t" style="left:1525px;top:655.0px;font-size:12.6px;color:#000;"><span style="display:inline-block;transform:scaleX(0.93);transform-origin:left">Fi 2 ch 1</span></div>
<svg class="a" style="left:1574px;top:653px" width="21" height="18"><rect width="21" height="18" fill="#000"/><rect x="0" y="17" width="21" height="1" fill="#d8d8d8"/><rect x="20" y="0" width="1" height="18" fill="#d8d8d8"/><path d="M1.8,13.1 L11.5,2.4 L20.4,13.1" stroke="#c040ff" stroke-width="1" fill="none"/></svg>
<div class="t" style="left:1525px;top:678.0px;font-size:12.6px;color:#000;"><span style="display:inline-block;transform:scaleX(0.93);transform-origin:left">Fi 3 ch 0</span></div>
<svg class="a" style="left:1574px;top:676px" width="21" height="18"><rect width="21" height="18" fill="#000"/><rect x="0" y="17" width="21" height="1" fill="#d8d8d8"/><rect x="20" y="0" width="1" height="18" fill="#d8d8d8"/><path d="M1.8,13.1 L11.5,2.4 L20.4,13.1" stroke="#ffa020" stroke-width="1" fill="none"/></svg>
<div class="t" style="left:1525px;top:701.0px;font-size:12.6px;color:#000;"><span style="display:inline-block;transform:scaleX(0.93);transform-origin:left">Fi 3 ch 1</span></div>
<svg class="a" style="left:1574px;top:699px" width="21" height="18"><rect width="21" height="18" fill="#000"/><rect x="0" y="17" width="21" height="1" fill="#d8d8d8"/><rect x="20" y="0" width="1" height="18" fill="#d8d8d8"/><path d="M1.8,13.1 L11.5,2.4 L20.4,13.1" stroke="#3040ff" stroke-width="1" fill="none"/></svg>
<div class="a" style="left:1526px;top:841px;width:88px;height:24px;background:linear-gradient(90deg,#b8b8b8 0%,#d6d6d6 8%,#cfcfcf 18%,#c4c4c4 80%,#a8a8a8 92%,#8c8c8c 100%);border-top:1px solid #dedede;border-bottom:2px solid #8e8e8e"></div>
<div class="a" style="left:1537px;top:845px;width:20px;height:16px;background:#8e8e8e;border:1px solid;border-color:#5a5a5a #9a9a9a #9a9a9a #5a5a5a"></div>
<svg class="a" style="left:1537px;top:845px" width="20" height="16"><rect x="2" y="2.5" width="3" height="3" fill="#40ff40"/><path d="M4.0,9.0 H16.0 M10.0,3.0 V15.0" stroke="#000" stroke-width="1.3"/><circle cx="10.0" cy="9.0" r="1.4" fill="#fff" stroke="#000" stroke-width="0.9"/></svg>
<div class="a" style="left:1559px;top:845px;width:20px;height:16px;background:#c2c2c2;border:1px solid;border-color:#dcdcdc #8a8a8a #8a8a8a #dcdcdc"></div>
<svg class="a" style="left:1559px;top:845px" width="20" height="16"><rect x="2" y="2.5" width="3" height="3" fill="#2a6a2a"/><circle cx="13.0" cy="6.0" r="3.8" fill="#dcdcf4" stroke="#000" stroke-width="1.1"/><path d="M13.0,3.8 V8.2 M10.8,6.0 H15.2" stroke="#000" stroke-width="1.1"/><path d="M10.0,9.0 L4.5,14.5" stroke="#000" stroke-width="2.4"/><path d="M10.0,9.0 L4.5,14.5" stroke="#ddd" stroke-width="0.8"/><path d="M12.5,12.5 H17.0 L14.75,15.0Z" fill="#000"/></svg>
<div class="a" style="left:1580px;top:845px;width:20px;height:16px;background:#c2c2c2;border:1px solid;border-color:#dcdcdc #8a8a8a #8a8a8a #dcdcdc"></div>
<svg class="a" style="left:1580px;top:845px" width="20" height="16"><rect x="2" y="2.5" width="3" height="3" fill="#2a6a2a"/><g transform="translate(3.5,0.5)" stroke-linecap="round"><path d="M5,9 V4 M7,8.5 V2.6 M9,8.5 V3 M11,9 V4.6 M4.2,11 L2,8" stroke="#000" stroke-width="2.6" fill="none"/><path d="M4,9 Q4,14.5 7.5,14.5 Q11.5,14.5 11.5,10 V8.5 H4Z" fill="#fff" stroke="#000" stroke-width="1"/><path d="M5,9.5 V4 M7,9.5 V2.6 M9,9.5 V3 M11,9.5 V4.6 M4.2,11 L2,8" stroke="#fff" stroke-width="0.9" fill="none"/></g></svg>
<div class="t" style="left:948px;top:880.0px;font-size:12.6px;color:#000;"><span style="display:inline-block;transform:scaleX(0.93);transform-origin:left">No. of files</span></div>
<div class="num" style="left:947px;top:896px;width:29px;height:22px"></div>
<div class="a" style="left:950px;top:899px;width:23px;height:17px;background:#d3d3d3"></div>
<div class="t" style="left:952px;top:900.5px;font-size:12.6px;color:#000;"><span style="display:inline-block;transform:scaleX(0.85);transform-origin:left">0</span></div>
<div class="a" style="left:1014px;top:889px;width:15px;height:29px;border-radius:50%;background:linear-gradient(90deg,#9a9a9a 0%,#e4e4e4 40%,#c0c0c0 100%);border:1px solid #8c8c8c"></div>
<div class="a" style="left:1015px;top:903.0px;width:13px;height:1.0px;background:#8a8a8a"></div>
<svg class="a" style="left:1014px;top:889px" width="15" height="29"><path d="M4.5,11.02 L7.5,5.800000000000001 L10.5,11.02 M4.5,17.98 L7.5,23.200000000000003 L10.5,17.98" stroke="#555" stroke-width="1" fill="none"/></svg>
<div class="num" style="left:1029px;top:894px;width:24px;height:21px"></div>
<div class="a" style="left:1032px;top:897px;width:18px;height:16px;background:#fafafa"></div>
<div class="t" style="left:1034px;top:898.0px;font-size:12.6px;color:#000;"><span style="display:inline-block;transform:scaleX(0.85);transform-origin:left">0</span></div>
<div class="t" style="left:1056px;top:877.0px;font-size:12.6px;color:#000;"><span style="display:inline-block;transform:scaleX(0.93);transform-origin:left">File</span></div>
<div class="a" style="left:1055px;top:893px;width:175px;height:32px;border-style:solid;border-width:2px 1px 1px 2px;border-color:#7a7a7a #e0e0e0 #e0e0e0 #7a7a7a"></div>
<div class="num" style="left:1059px;top:897px;width:167px;height:24px"></div>
<div class="a" style="left:1062px;top:900px;width:161px;height:19px;background:#bababa"></div>
<div class="a" style="left:1319px;top:883px;width:14px;height:29px;background:#c4c4c4;border:1px solid #555"></div>
<div class="a" style="left:1320px;top:884px;width:12px;height:13px;background:#7a7a7a"></div>
<div class="a" style="left:1320px;top:900px;width:12px;height:1px;background:#777"></div>
<div class="a" style="left:1320px;top:905px;width:12px;height:1px;background:#777"></div>
<div class="t" style="left:1334.5px;top:886.0px;font-size:12.6px;color:#000;"><span style="display:inline-block;transform:scaleX(0.93);transform-origin:left">Unwrap phase</span></div>
<div class="t" style="left:1495px;top:883.0px;font-size:12.6px;color:#000;"><span style="display:inline-block;transform:scaleX(0.93);transform-origin:left">Action</span></div>
<div class="a" style="left:1495px;top:901px;width:115px;height:21px;background:linear-gradient(180deg,#d0d0d0,#b8b8b8);border:1px solid #8a8a8a;border-radius:2px"></div>
<div class="t" style="left:1511px;top:905.0px;font-size:12.6px;color:#000;"><span style="display:inline-block;transform:scaleX(0.93);transform-origin:left">Do nothing</span></div>
<svg class="a" style="left:1587px;top:906px" width="16" height="12"><path d="M1,2 L15,2 L8,10 Z" fill="none" stroke="#333" stroke-width="1"/></svg>
<div class="a" style="left:944px;top:922px;width:51px;height:16px;border:1px solid #777;background:#bdbdbd;box-shadow:inset 1px 1px 0 #ddd"></div>
<div class="t" style="left:946px;top:923.0px;font-size:12.6px;color:#000;"><span style="display:inline-block;transform:scaleX(0.93);transform-origin:left">Directory</span></div>
<div class="a" style="left:1153px;top:922px;width:41px;height:16px;border:1px solid #777;background:#bdbdbd;box-shadow:inset 1px 1px 0 #ddd"></div>
<div class="t" style="left:1155px;top:923.0px;font-size:12.6px;color:#000;"><span style="display:inline-block;transform:scaleX(0.93);transform-origin:left">Header</span></div>
<div class="a" style="left:944px;top:940px;width:207px;height:56px;border-style:solid;border-width:1px 2px 2px 1px;border-color:#e0e0e0 #707070 #8a8a8a #e0e0e0;background:#b2b2b2"></div>
<div class="a" style="left:945px;top:941px;width:10px;height:53px;background:#bebebe;border-right:1px solid #777"></div>
<svg class="a" style="left:946px;top:962px" width="9" height="12"><rect x="1.5" y="1.5" width="3" height="3" fill="none" stroke="#000" stroke-width="1.3"/><rect x="4.5" y="6.5" width="3.5" height="3.5" fill="#fff" stroke="#000" stroke-width="1.3"/></svg>
<div class="a" style="left:1153px;top:940px;width:209px;height:61px;border-style:solid;border-width:1px 2px 2px 1px;border-color:#e0e0e0 #707070 #8a8a8a #e0e0e0;background:#b2b2b2"></div>
<div class="a" style="left:1155px;top:942px;width:3px;height:56px;background:#eee"></div>
<div class="a" style="left:1158px;top:942px;width:1px;height:56px;background:#777"></div>
<div class="t" style="left:995.5px;top:994.0px;font-size:12.6px;color:#000;"><span style="display:inline-block;transform:scaleX(0.93);transform-origin:left">Mag graph data</span></div>
<div class="a" style="left:952px;top:1005px;width:16px;height:31px;border-radius:50%;background:linear-gradient(90deg,#9a9a9a 0%,#e4e4e4 40%,#c0c0c0 100%);border:1px solid #8c8c8c"></div>
<div class="a" style="left:953px;top:1020.0px;width:14px;height:1.0px;background:#8a8a8a"></div>
<svg class="a" style="left:952px;top:1005px" width="16" height="31"><path d="M5.0,11.78 L8.0,6.2 L11.0,11.78 M5.0,19.22 L8.0,24.8 L11.0,19.22" stroke="#555" stroke-width="1" fill="none"/></svg>
<div class="num" style="left:968px;top:1011px;width:25px;height:21px"></div>
<div class="a" style="left:971px;top:1014px;width:19px;height:16px;background:#fafafa"></div>
<div class="t" style="left:973px;top:1015.0px;font-size:12.6px;color:#000;"><span style="display:inline-block;transform:scaleX(0.85);transform-origin:left">11</span></div>
<div class="a" style="left:994px;top:1010px;width:121px;height:100px;border-style:solid;border-width:2px 1px 1px 2px;border-color:#7a7a7a #e0e0e0 #e0e0e0 #7a7a7a"></div>
<div class="a" style="left:997px;top:1014px;width:114px;height:91px;border-style:solid;border-width:3px;border-color:#a0a0a0 #c4c4c4 #c4c4c4 #a0a0a0"></div>
<div class="t" style="left:1045.5px;top:1019.0px;font-size:12.6px;color:#7a7a7a;"><span style="display:inline-block;transform:scaleX(0.93);transform-origin:left">freq</span></div>
<div class="a" style="left:1003px;top:1031px;width:15px;height:30px;border-radius:50%;background:linear-gradient(90deg,#9a9a9a 0%,#e4e4e4 40%,#c0c0c0 100%);border:1px solid #8c8c8c"></div>
<div class="a" style="left:1004px;top:1045.5px;width:13px;height:1.0px;background:#8a8a8a"></div>
<svg class="a" style="left:1003px;top:1031px" width="15" height="30"><path d="M4.5,11.4 L7.5,6.0 L10.5,11.4 M4.5,18.6 L7.5,24.0 L10.5,18.6" stroke="#999" stroke-width="1" fill="none"/></svg>
<div class="num" style="left:1018px;top:1035px;width:26px;height:21px"></div>
<div class="a" style="left:1021px;top:1038px;width:20px;height:16px;background:#cbcbcb"></div>
<div class="t" style="left:1023px;top:1039.0px;font-size:12.6px;color:#8a8a8a;"><span style="display:inline-block;transform:scaleX(0.85);transform-origin:left">2</span></div>
<div class="num" style="left:1045px;top:1037px;width:60px;height:28px"></div>
<div class="a" style="left:1048px;top:1040px;width:54px;height:23px;background:#c6c6c6"></div>
<div class="t" style="left:1050px;top:1044.5px;font-size:12.6px;color:#9a9a9a;"><span style="display:inline-block;transform:scaleX(0.85);transform-origin:left">0.00</span></div>
<div class="a" style="left:1003px;top:1066px;width:15px;height:30px;border-radius:50%;background:linear-gradient(90deg,#9a9a9a 0%,#e4e4e4 40%,#c0c0c0 100%);border:1px solid #8c8c8c"></div>
<div class="a" style="left:1004px;top:1080.5px;width:13px;height:1.0px;background:#8a8a8a"></div>
<svg class="a" style="left:1003px;top:1066px" width="15" height="30"><path d="M4.5,11.4 L7.5,6.0 L10.5,11.4 M4.5,18.6 L7.5,24.0 L10.5,18.6" stroke="#999" stroke-width="1" fill="none"/></svg>
<div class="num" style="left:1018px;top:1070px;width:26px;height:21px"></div>
<div class="a" style="left:1021px;top:1073px;width:20px;height:16px;background:#cbcbcb"></div>
<div class="t" style="left:1023px;top:1074.0px;font-size:12.6px;color:#8a8a8a;"><span style="display:inline-block;transform:scaleX(0.85);transform-origin:left">2</span></div>
<div class="num" style="left:1045px;top:1072px;width:60px;height:28px"></div>
<div class="a" style="left:1048px;top:1075px;width:54px;height:23px;background:#c6c6c6"></div>
<div class="t" style="left:1050px;top:1079.5px;font-size:12.6px;color:#9a9a9a;"><span style="display:inline-block;transform:scaleX(0.85);transform-origin:left">0.00</span></div>
<div class="a" style="left:1118px;top:1010px;width:16px;height:31px;border-radius:50%;background:linear-gradient(90deg,#9a9a9a 0%,#e4e4e4 40%,#c0c0c0 100%);border:1px solid #8c8c8c"></div>
<div class="a" style="left:1119px;top:1025.0px;width:14px;height:1.0px;background:#8a8a8a"></div>
<svg class="a" style="left:1118px;top:1010px" width="16" height="31"><path d="M5.0,11.78 L8.0,6.2 L11.0,11.78 M5.0,19.22 L8.0,24.8 L11.0,19.22" stroke="#555" stroke-width="1" fill="none"/></svg>
<div class="num" style="left:1133px;top:1015px;width:25px;height:21px"></div>
<div class="a" style="left:1136px;top:1018px;width:19px;height:16px;background:#fafafa"></div>
<div class="t" style="left:1138px;top:1019.0px;font-size:12.6px;color:#000;"><span style="display:inline-block;transform:scaleX(0.85);transform-origin:left">0</span></div>
<div class="t" style="left:1161px;top:999.0px;font-size:12.6px;color:#000;"><span style="display:inline-block;transform:scaleX(0.93);transform-origin:left">Phase graph data</span></div>
<div class="a" style="left:1160px;top:1014px;width:120px;height:101px;border-style:solid;border-width:2px 1px 1px 2px;border-color:#7a7a7a #e0e0e0 #e0e0e0 #7a7a7a"></div>
<div class="a" style="left:1163px;top:1019px;width:116px;height:91px;border-style:solid;border-width:3px;border-color:#a0a0a0 #c4c4c4 #c4c4c4 #a0a0a0"></div>
<div class="t" style="left:1212px;top:1024.0px;font-size:12.6px;color:#7a7a7a;"><span style="display:inline-block;transform:scaleX(0.93);transform-origin:left">freq</span></div>
<div class="a" style="left:1170px;top:1036px;width:14px;height:30px;border-radius:50%;background:linear-gradient(90deg,#9a9a9a 0%,#e4e4e4 40%,#c0c0c0 100%);border:1px solid #8c8c8c"></div>
<div class="a" style="left:1171px;top:1050.5px;width:12px;height:1.0px;background:#8a8a8a"></div>
<svg class="a" style="left:1170px;top:1036px" width="14" height="30"><path d="M4.0,11.4 L7.0,6.0 L10.0,11.4 M4.0,18.6 L7.0,24.0 L10.0,18.6" stroke="#999" stroke-width="1" fill="none"/></svg>
<div class="num" style="left:1184px;top:1040px;width:25px;height:21px"></div>
<div class="a" style="left:1187px;top:1043px;width:19px;height:16px;background:#cbcbcb"></div>
<div class="t" style="left:1189px;top:1044.0px;font-size:12.6px;color:#8a8a8a;"><span style="display:inline-block;transform:scaleX(0.85);transform-origin:left">9</span></div>
<div class="num" style="left:1212px;top:1041px;width:60px;height:29px"></div>
<div class="a" style="left:1215px;top:1044px;width:54px;height:24px;background:#c6c6c6"></div>
<div class="t" style="left:1217px;top:1049.0px;font-size:12.6px;color:#9a9a9a;"><span style="display:inline-block;transform:scaleX(0.85);transform-origin:left">0.00</span></div>
<div class="a" style="left:1170px;top:1071px;width:14px;height:30px;border-radius:50%;background:linear-gradient(90deg,#9a9a9a 0%,#e4e4e4 40%,#c0c0c0 100%);border:1px solid #8c8c8c"></div>
<div class="a" style="left:1171px;top:1085.5px;width:12px;height:1.0px;background:#8a8a8a"></div>
<svg class="a" style="left:1170px;top:1071px" width="14" height="30"><path d="M4.0,11.4 L7.0,6.0 L10.0,11.4 M4.0,18.6 L7.0,24.0 L10.0,18.6" stroke="#999" stroke-width="1" fill="none"/></svg>
<div class="num" style="left:1184px;top:1075px;width:25px;height:21px"></div>
<div class="a" style="left:1187px;top:1078px;width:19px;height:16px;background:#cbcbcb"></div>
<div class="t" style="left:1189px;top:1079.0px;font-size:12.6px;color:#8a8a8a;"><span style="display:inline-block;transform:scaleX(0.85);transform-origin:left">0</span></div>
<div class="num" style="left:1212px;top:1076px;width:60px;height:29px"></div>
<div class="a" style="left:1215px;top:1079px;width:54px;height:24px;background:#c6c6c6"></div>
<div class="t" style="left:1217px;top:1084.0px;font-size:12.6px;color:#9a9a9a;"><span style="display:inline-block;transform:scaleX(0.85);transform-origin:left">0.00</span></div>
<div class="t" style="left:1365.5px;top:927.0px;font-size:12.6px;color:#000;"><span style="display:inline-block;transform:scaleX(0.93);transform-origin:left">Spectrum bundle</span></div>
<div class="a" style="left:1364px;top:942px;width:143px;height:177px;overflow:hidden"><div class="a" style="left:0;top:0;width:143px;height:200px;border-style:solid;border-width:3px 3px 0 3px;border-color:#a2a2a2 #c4c4c4 #c4c4c4 #a8a8a8"></div></div>
<div class="t" style="left:1424px;top:948.0px;font-size:12.6px;color:#000;"><span style="display:inline-block;transform:scaleX(0.93);transform-origin:left">Frequencies</span></div>
<div class="a" style="left:1368px;top:961px;width:14px;height:26px;border-radius:50%;background:linear-gradient(90deg,#9a9a9a 0%,#e4e4e4 40%,#c0c0c0 100%);border:1px solid #8c8c8c"></div>
<div class="a" style="left:1369px;top:973.5px;width:12px;height:1.0px;background:#8a8a8a"></div>
<svg class="a" style="left:1368px;top:961px" width="14" height="26"><path d="M4.0,9.88 L7.0,5.2 L10.0,9.88 M4.0,16.12 L7.0,20.8 L10.0,16.12" stroke="#555" stroke-width="1" fill="none"/></svg>
<div class="num" style="left:1381px;top:963px;width:42px;height:26px"></div>
<div class="a" style="left:1384px;top:966px;width:36px;height:21px;background:#fafafa"></div>
<div class="t" style="left:1386px;top:969.5px;font-size:12.6px;color:#000;"><span style="display:inline-block;transform:scaleX(0.85);transform-origin:left">4</span></div>
<div class="a" style="left:1424px;top:963px;width:72px;height:34px;border-style:solid;border-width:3px;border-color:#9c9c9c #c4c4c4 #c4c4c4 #9c9c9c"></div>
<div class="a" style="left:1427px;top:967px;width:13px;height:25px;border-radius:50%;background:linear-gradient(90deg,#9a9a9a 0%,#e4e4e4 40%,#c0c0c0 100%);border:1px solid #8c8c8c"></div>
<div class="a" style="left:1428px;top:979.0px;width:11px;height:1.0px;background:#8a8a8a"></div>
<svg class="a" style="left:1427px;top:967px" width="13" height="25"><path d="M3.5,9.5 L6.5,5.0 L9.5,9.5 M3.5,15.5 L6.5,20.0 L9.5,15.5" stroke="#999" stroke-width="1" fill="none"/></svg>
<div class="num" style="left:1440px;top:969px;width:51px;height:23px"></div>
<div class="a" style="left:1443px;top:972px;width:45px;height:18px;background:#cdcdcd"></div>
<div class="t" style="left:1445px;top:974.0px;font-size:12.6px;color:#8a8a8a;"><span style="display:inline-block;transform:scaleX(0.85);transform-origin:left">0</span></div>
<div class="t" style="left:1424px;top:995.0px;font-size:12.6px;color:#000;"><span style="display:inline-block;transform:scaleX(0.93);transform-origin:left">magnitude</span></div>
<div class="a" style="left:1368px;top:1008px;width:14px;height:25px;border-radius:50%;background:linear-gradient(90deg,#9a9a9a 0%,#e4e4e4 40%,#c0c0c0 100%);border:1px solid #8c8c8c"></div>
<div class="a" style="left:1369px;top:1020.0px;width:12px;height:1.0px;background:#8a8a8a"></div>
<svg class="a" style="left:1368px;top:1008px" width="14" height="25"><path d="M4.0,9.5 L7.0,5.0 L10.0,9.5 M4.0,15.5 L7.0,20.0 L10.0,15.5" stroke="#555" stroke-width="1" fill="none"/></svg>
<div class="num" style="left:1381px;top:1011px;width:42px;height:22px"></div>
<div class="a" style="left:1384px;top:1014px;width:36px;height:17px;background:#fafafa"></div>
<div class="t" style="left:1386px;top:1015.5px;font-size:12.6px;color:#000;"><span style="display:inline-block;transform:scaleX(0.85);transform-origin:left">1</span></div>
<div class="a" style="left:1424px;top:1011px;width:78px;height:32px;border-style:solid;border-width:3px;border-color:#9c9c9c #c4c4c4 #c4c4c4 #9c9c9c"></div>
<div class="a" style="left:1427px;top:1014px;width:13px;height:25px;border-radius:50%;background:linear-gradient(90deg,#9a9a9a 0%,#e4e4e4 40%,#c0c0c0 100%);border:1px solid #8c8c8c"></div>
<div class="a" style="left:1428px;top:1026.0px;width:11px;height:1.0px;background:#8a8a8a"></div>
<svg class="a" style="left:1427px;top:1014px" width="13" height="25"><path d="M3.5,9.5 L6.5,5.0 L9.5,9.5 M3.5,15.5 L6.5,20.0 L9.5,15.5" stroke="#999" stroke-width="1" fill="none"/></svg>
<div class="num" style="left:1440px;top:1016px;width:57px;height:23px"></div>
<div class="a" style="left:1443px;top:1019px;width:51px;height:18px;background:#cdcdcd"></div>
<div class="t" style="left:1445px;top:1021.0px;font-size:12.6px;color:#8a8a8a;"><span style="display:inline-block;transform:scaleX(0.85);transform-origin:left">0</span></div>
<div class="a" style="left:1368px;top:1037px;width:14px;height:25px;border-radius:50%;background:linear-gradient(90deg,#9a9a9a 0%,#e4e4e4 40%,#c0c0c0 100%);border:1px solid #8c8c8c"></div>
<div class="a" style="left:1369px;top:1049.0px;width:12px;height:1.0px;background:#8a8a8a"></div>
<svg class="a" style="left:1368px;top:1037px" width="14" height="25"><path d="M4.0,9.5 L7.0,5.0 L10.0,9.5 M4.0,15.5 L7.0,20.0 L10.0,15.5" stroke="#555" stroke-width="1" fill="none"/></svg>
<div class="num" style="left:1381px;top:1039px;width:42px;height:22px"></div>
<div class="a" style="left:1384px;top:1042px;width:36px;height:17px;background:#fafafa"></div>
<div class="t" style="left:1386px;top:1043.5px;font-size:12.6px;color:#000;"><span style="display:inline-block;transform:scaleX(0.85);transform-origin:left">15</span></div>
<div class="t" style="left:1424px;top:1063.0px;font-size:12.6px;color:#000;"><span style="display:inline-block;transform:scaleX(0.93);transform-origin:left">phase</span></div>
<div class="a" style="left:1368px;top:1076px;width:14px;height:26px;border-radius:50%;background:linear-gradient(90deg,#9a9a9a 0%,#e4e4e4 40%,#c0c0c0 100%);border:1px solid #8c8c8c"></div>
<div class="a" style="left:1369px;top:1088.5px;width:12px;height:1.0px;background:#8a8a8a"></div>
<svg class="a" style="left:1368px;top:1076px" width="14" height="26"><path d="M4.0,9.88 L7.0,5.2 L10.0,9.88 M4.0,16.12 L7.0,20.8 L10.0,16.12" stroke="#555" stroke-width="1" fill="none"/></svg>
<div class="num" style="left:1381px;top:1079px;width:42px;height:22px"></div>
<div class="a" style="left:1384px;top:1082px;width:36px;height:17px;background:#fafafa"></div>
<div class="t" style="left:1386px;top:1083.5px;font-size:12.6px;color:#000;"><span style="display:inline-block;transform:scaleX(0.85);transform-origin:left">0</span></div>
<div class="a" style="left:1424px;top:1078px;width:78px;height:34px;border-style:solid;border-width:3px;border-color:#9c9c9c #c4c4c4 #c4c4c4 #9c9c9c"></div>
<div class="a" style="left:1427px;top:1082px;width:13px;height:25px;border-radius:50%;background:linear-gradient(90deg,#9a9a9a 0%,#e4e4e4 40%,#c0c0c0 100%);border:1px solid #8c8c8c"></div>
<div class="a" style="left:1428px;top:1094.0px;width:11px;height:1.0px;background:#8a8a8a"></div>
<svg class="a" style="left:1427px;top:1082px" width="13" height="25"><path d="M3.5,9.5 L6.5,5.0 L9.5,9.5 M3.5,15.5 L6.5,20.0 L9.5,15.5" stroke="#999" stroke-width="1" fill="none"/></svg>
<div class="num" style="left:1440px;top:1084px;width:57px;height:23px"></div>
<div class="a" style="left:1443px;top:1087px;width:51px;height:18px;background:#cdcdcd"></div>
<div class="t" style="left:1445px;top:1089.0px;font-size:12.6px;color:#8a8a8a;"><span style="display:inline-block;transform:scaleX(0.85);transform-origin:left">0</span></div>
<div class="a" style="left:1366px;top:1103px;width:60px;height:16px;overflow:hidden">
<div class="a" style="left:2px;top:0px;width:14px;height:26px;border-radius:50%;background:linear-gradient(90deg,#9a9a9a 0%,#e4e4e4 40%,#c0c0c0 100%);border:1px solid #8c8c8c"></div>
<div class="num" style="left:15px;top:4px;width:42px;height:22px"></div><div class="a" style="left:18px;top:7px;width:36px;height:17px;background:#fafafa"></div><div class="t" style="left:20px;top:6px;font-size:12.6px">0</div></div>
<div class="a" style="left:1542px;top:933px;width:44px;height:40px;background:#ff8010;border:0px solid #000;"></div>
<div class="t" style="left:1364.0px;width:400px;text-align:center;top:938.5px;font-size:12.6px;color:#000;"><span style="display:inline-block;transform:scaleX(0.88);transform-origin:center">FILE</span></div>
<div class="t" style="left:1364.0px;width:400px;text-align:center;top:953.5px;font-size:12.6px;color:#000;"><span style="display:inline-block;transform:scaleX(0.88);transform-origin:center">RATIO</span></div>
<div class="a" style="left:6px;top:140px;width:923px;height:905px;border:1px solid #1883d7;background:#f0f0f0"></div>
<div class="a" style="left:7px;top:141px;width:921px;height:32px;background:#fff"></div>
<svg class="a" style="left:17px;top:148px" width="16" height="16"><rect x="0.5" y="0.5" width="15" height="15" fill="#fff" stroke="#1a6fd0"/><rect x="0.5" y="0.5" width="15" height="3" fill="#1a6fd0"/><rect x="3" y="5" width="10" height="9" fill="#2a2a20"/><path d="M4,5 L12,9.5 L4,14 Z" fill="#f0d000"/><circle cx="7" cy="9.5" r="1.3" fill="#000"/><rect x="1" y="8" width="2" height="1.5" fill="#e02020"/><rect x="13" y="8" width="2" height="1.5" fill="#e02020"/><rect x="1" y="11" width="2" height="1.5" fill="#2040e0"/></svg>
<div class="t" style="left:38px;top:149.5px;font-size:12.5px;color:#000;"><span style="display:inline-block;transform:scaleX(0.93);transform-origin:left">Hi-freq meas sys v4.7.2.vi</span></div>
<div class="a" style="left:809px;top:156px;width:11px;height:1px;background:#000"></div>
<div class="a" style="left:854px;top:151px;width:10px;height:10px;border:1px solid #000"></div>
<svg class="a" style="left:899px;top:150px" width="12" height="12"><path d="M1,1 L11,11 M11,1 L1,11" stroke="#000" stroke-width="1.1"/></svg>
<div class="a" style="left:7px;top:173px;width:921px;height:45px;background:#f0f0f0"></div>
<div class="t" style="left:14px;top:174.5px;font-size:12.8px;color:#000;"><span style="display:inline-block;transform:scaleX(0.92);transform-origin:left">File</span></div>
<div class="t" style="left:46px;top:174.5px;font-size:12.8px;color:#000;"><span style="display:inline-block;transform:scaleX(0.92);transform-origin:left">Edit</span></div>
<div class="t" style="left:80px;top:174.5px;font-size:12.8px;color:#000;"><span style="display:inline-block;transform:scaleX(0.92);transform-origin:left">Operate</span></div>
<div class="t" style="left:136px;top:174.5px;font-size:12.8px;color:#000;"><span style="display:inline-block;transform:scaleX(0.92);transform-origin:left">Tools</span></div>
<div class="t" style="left:179px;top:174.5px;font-size:12.8px;color:#000;"><span style="display:inline-block;transform:scaleX(0.92);transform-origin:left">Window</span></div>
<div class="t" style="left:237px;top:174.5px;font-size:12.8px;color:#000;"><span style="display:inline-block;transform:scaleX(0.92);transform-origin:left">Help</span></div>
<div class="a" style="left:7px;top:193px;width:886px;height:1px;background:#a0a0a0"></div>
<div class="a" style="left:893px;top:173px;width:1px;height:45px;background:#a0a0a0"></div>
<div class="a" style="left:7px;top:218px;width:921px;height:1px;background:#7a7a7a"></div>
<div class="a" style="left:58px;top:196px;width:21px;height:21px;border:1px solid #c8c8c8;background:#eaeaea"></div>
<svg class="a" style="left:60px;top:198px" width="18" height="18"><path d="M2,6 h2 M2,11 h2 M5,4 v11 M7,4 v11 M8,5 H11 V2 L17,8.5 L11,15 V12 H8 Z" stroke="#000" stroke-width="1" fill="#000"/></svg>
<div class="a" style="left:79px;top:196px;width:22px;height:21px;border:1px solid #6a6a6a;background:#e4e4e4"></div>
<svg class="a" style="left:81px;top:198px" width="18" height="18"><path d="M4,7 C5,3 11,2 13,6 L15,4 V9 H10 L12,7 C10,5 7,5 6,8 Z M14,11 C13,15 7,16 5,12 L3,14 V9 H8 L6,11 C8,13 11,13 12,10 Z" stroke="#000" stroke-width="1" fill="#fff"/></svg>
<div class="a" style="left:105px;top:196px;width:22px;height:21px;border:1px solid #6a6a6a;background:#eaeaea"></div>
<svg class="a" style="left:107px;top:198px" width="18" height="18"><path d="M6,1.5 H12 L16.5,6 V12 L12,16.5 H6 L1.5,12 V6 Z" fill="#fff" stroke="#000"/><circle cx="9" cy="9" r="6.3" fill="#c0262a"/><path d="M4,8 A5,5 0 0 1 14,8 Z" fill="#d8585a" opacity="0.5"/></svg>
<div class="a" style="left:895px;top:179px;width:32px;height:32px;border:1px solid #000;background:#fff"></div>
<div class="a" style="left:897px;top:180px;width:30px;font-family:Liberation Sans;font-size:10px;line-height:9px;letter-spacing:-0.6px;color:#000">Hi·freq<br>meas<br>sys</div>
<div class="a" style="left:7px;top:219px;width:904px;height:808px;background:#b4b4b4"></div>
<div class="a" style="left:911px;top:219px;width:17px;height:808px;background:#f0f0f0"></div>
<div class="a" style="left:912px;top:236px;width:15px;height:749px;background:#cdcdcd"></div>
<svg class="a" style="left:913px;top:222px" width="13" height="10"><path d="M2,7 L6.5,2.5 L11,7" stroke="#606060" stroke-width="1.8" fill="none"/></svg>
<svg class="a" style="left:913px;top:1014px" width="13" height="10"><path d="M2,2.5 L6.5,7 L11,2.5" stroke="#606060" stroke-width="1.8" fill="none"/></svg>
<div class="a" style="left:7px;top:1027px;width:921px;height:17px;background:#f0f0f0"></div>
<div class="a" style="left:24px;top:1028px;width:370px;height:15px;background:#f0f0f0"></div>
<div class="a" style="left:394px;top:1028px;width:499px;height:15px;background:#cdcdcd"></div>
<svg class="a" style="left:11px;top:1030px" width="10" height="12"><path d="M7,2 L3,6 L7,10" stroke="#606060" stroke-width="1.8" fill="none"/></svg>
<svg class="a" style="left:898px;top:1030px" width="10" height="12"><path d="M3,2 L7,6 L3,10" stroke="#606060" stroke-width="1.8" fill="none"/></svg>
<div class="a" style="left:15px;top:256px;width:890px;height:770px;background:#b4b4b4;border-style:solid;border-width:2px 2px 2px 2px;border-color:#cfcfcf #8a8a8a #8a8a8a #cdcdcd"></div>
<div class="a" style="left:59px;top:232px;width:47px;height:25px;background:#b0b0b0;border-style:solid;border-width:2px 2px 0 2px;border-color:#cdcdcd #8a8a8a #8a8a8a #cdcdcd;border-radius:3px 3px 0 0"></div>
<div class="t" style="left:66.5px;top:236.5px;font-size:12.6px;color:#000;"><span style="display:inline-block;transform:scaleX(0.93);transform-origin:left">Setup</span></div>
<div class="a" style="left:106px;top:232px;width:50px;height:25px;background:#b0b0b0;border-style:solid;border-width:2px 2px 0 2px;border-color:#cdcdcd #8a8a8a #8a8a8a #cdcdcd;border-radius:3px 3px 0 0"></div>
<div class="t" style="left:117px;top:236.5px;font-size:12.6px;color:#000;"><span style="display:inline-block;transform:scaleX(0.93);transform-origin:left">Errors</span></div>
<div class="a" style="left:156px;top:232px;width:81px;height:25px;background:#b0b0b0;border-style:solid;border-width:2px 2px 0 2px;border-color:#cdcdcd #8a8a8a #8a8a8a #cdcdcd;border-radius:3px 3px 0 0"></div>
<div class="t" style="left:167px;top:236.5px;font-size:12.6px;color:#000;"><span style="display:inline-block;transform:scaleX(0.93);transform-origin:left">Diagnostics</span></div>
<div class="a" style="left:237px;top:232px;width:51px;height:25px;background:#b0b0b0;border-style:solid;border-width:2px 2px 0 2px;border-color:#cdcdcd #8a8a8a #8a8a8a #cdcdcd;border-radius:3px 3px 0 0"></div>
<div class="t" style="left:248px;top:236.5px;font-size:12.6px;color:#000;"><span style="display:inline-block;transform:scaleX(0.93);transform-origin:left">Other</span></div>
<div class="a" style="left:15px;top:230px;width:45px;height:30px;background:#b4b4b4;border-style:solid;border-width:2px 2px 0 2px;border-color:#d0d0d0 #8a8a8a #8a8a8a #d0d0d0;border-radius:3px 3px 0 0"></div>
<div class="a" style="left:17px;top:256px;width:41px;height:3px;background:#b4b4b4"></div>
<div class="t" style="left:24px;top:235.5px;font-size:12.6px;color:#000;"><span style="display:inline-block;transform:scaleX(0.93);transform-origin:left">Run</span></div>
<div class="t" style="left:297px;top:239.5px;font-size:12.6px;color:#000;"><span style="display:inline-block;transform:scaleX(0.93);transform-origin:left">Copyright 2018 Massachusetts Eye &amp; Ear Infirmary.&nbsp; All rights reserved.</span></div>
<div class="a" style="left:32px;top:271px;width:192px;height:131px;border:1px solid #6e6e6e;"></div>
<div class="a" style="left:33px;top:272px;width:190px;height:129px;border:1px solid #d6d6d6;"></div>
<div class="t" style="left:40px;top:278.5px;font-size:12.6px;color:#000;"><span style="display:inline-block;transform:scaleX(0.93);transform-origin:left">Directory</span></div>
<div class="num" style="left:40px;top:294px;width:181px;height:57px"></div>
<div class="a" style="left:43px;top:297px;width:175px;height:52px;background:#d3d3d3"></div>
<div class="a" style="left:43px;top:297px;width:9px;height:52px;background:#a8a8a8"></div>
<svg class="a" style="left:44px;top:316.5px" width="9" height="12"><rect x="1.5" y="1.5" width="3" height="3" fill="none" stroke="#000" stroke-width="1.3"/><rect x="4.5" y="6.5" width="3.5" height="3.5" fill="#fff" stroke="#000" stroke-width="1.3"/><path d="M3,4.5 V8 H4.5" stroke="#000" fill="none"/></svg>
<div class="t" style="left:53px;top:300.0px;font-size:12.6px;color:#000;"><span style="display:inline-block;transform:scaleX(0.93);transform-origin:left">C:\LabView 2015 programs\</span></div>
<div class="t" style="left:53px;top:315.0px;font-size:12.6px;color:#000;"><span style="display:inline-block;transform:scaleX(0.93);transform-origin:left">Hi-freq meas sys LV2015\test</span></div>
<div class="t" style="left:43px;top:354.0px;font-size:12.6px;color:#000;"><span style="display:inline-block;transform:scaleX(0.93);transform-origin:left">File prefix</span></div>
<div class="num" style="left:42px;top:370px;width:100px;height:25px"></div>
<div class="a" style="left:45px;top:373px;width:94px;height:20px;background:#fafafa"></div>
<div class="t" style="left:47px;top:376.0px;font-size:12.6px;color:#000;"><span style="display:inline-block;transform:scaleX(0.93);transform-origin:left">f</span></div>
<div class="t" style="left:148px;top:354.5px;font-size:12.6px;color:#000;"><span style="display:inline-block;transform:scaleX(0.93);transform-origin:left">Next file index</span></div>
<div class="a" style="left:153px;top:369px;width:12px;height:24px;border-radius:50%;background:linear-gradient(90deg,#9a9a9a 0%,#e4e4e4 40%,#c0c0c0 100%);border:1px solid #8c8c8c"></div>
<div class="a" style="left:154px;top:380.5px;width:10px;height:1.0px;background:#8a8a8a"></div>
<svg class="a" style="left:153px;top:369px" width="12" height="24"><path d="M3.0,9.120000000000001 L6.0,4.800000000000001 L9.0,9.120000000000001 M3.0,14.879999999999999 L6.0,19.200000000000003 L9.0,14.879999999999999" stroke="#555" stroke-width="1" fill="none"/></svg>
<div class="num" style="left:166px;top:370px;width:52px;height:25px"></div>
<div class="a" style="left:169px;top:373px;width:46px;height:20px;background:#fafafa"></div>
<div class="t" style="left:171px;top:376.0px;font-size:12.6px;color:#000;"><span style="display:inline-block;transform:scaleX(0.85);transform-origin:left">1</span></div>
<div class="a" style="left:32px;top:414px;width:192px;height:180px;border:1px solid #6e6e6e;"></div>
<div class="a" style="left:33px;top:415px;width:190px;height:178px;border:1px solid #d6d6d6;"></div>
<div class="a" style="left:40px;top:420px;width:48px;height:47px;background:#fff;border:2px solid #000;"></div>
<div class="t" style="left:-136.0px;width:400px;text-align:center;top:429.0px;font-size:12.6px;color:#000;"><span style="display:inline-block;transform:scaleX(0.88);transform-origin:center">NEW</span></div>
<div class="t" style="left:-136.0px;width:400px;text-align:center;top:444.0px;font-size:12.6px;color:#000;"><span style="display:inline-block;transform:scaleX(0.88);transform-origin:center">STIM</span></div>
<div class="t" style="left:112px;top:422.0px;font-size:12.6px;color:#000;"><span style="display:inline-block;transform:scaleX(0.93);transform-origin:left">Stimulus</span></div>
<div class="num" style="left:111px;top:439px;width:112px;height:22px"></div>
<div class="a" style="left:114px;top:442px;width:106px;height:17px;background:#d3d3d3"></div>
<div class="t" style="left:116px;top:443.5px;font-size:12.6px;color:#000;"><span style="display:inline-block;transform:scaleX(0.93);transform-origin:left">Linear chirp</span></div>
<div class="t" style="left:40px;top:476.5px;font-size:12.6px;color:#000;"><span style="display:inline-block;transform:scaleX(0.93);transform-origin:left">Min Freq (Hz)</span></div>
<div class="num" style="left:39px;top:493px;width:54px;height:22px"></div>
<div class="a" style="left:42px;top:496px;width:48px;height:17px;background:#d3d3d3"></div>
<div class="t" style="left:44px;top:497.5px;font-size:12.6px;color:#000;"><span style="display:inline-block;transform:scaleX(0.85);transform-origin:left">99.01</span></div>
<div class="t" style="left:144px;top:479.0px;font-size:12.6px;color:#000;"><span style="display:inline-block;transform:scaleX(0.93);transform-origin:left">Stim RMS</span></div>
<div class="num" style="left:143px;top:495px;width:54px;height:23px"></div>
<div class="a" style="left:146px;top:498px;width:48px;height:18px;background:#d3d3d3"></div>
<div class="t" style="left:148px;top:500.0px;font-size:12.6px;color:#000;"><span style="display:inline-block;transform:scaleX(0.85);transform-origin:left">0.430</span></div>
<div class="t" style="left:40px;top:514.0px;font-size:12.6px;color:#000;"><span style="display:inline-block;transform:scaleX(0.93);transform-origin:left">Max Freq</span></div>
<div class="num" style="left:39px;top:528px;width:62px;height:22px"></div>
<div class="a" style="left:42px;top:531px;width:56px;height:17px;background:#d3d3d3"></div>
<div class="t" style="left:44px;top:532.5px;font-size:12.6px;color:#000;"><span style="display:inline-block;transform:scaleX(0.85);transform-origin:left">99009.90</span></div>
<div class="t" style="left:130px;top:516.5px;font-size:12.6px;color:#000;"><span style="display:inline-block;transform:scaleX(0.93);transform-origin:left">Meas type</span></div>
<div class="num" style="left:104px;top:531px;width:119px;height:23px"></div>
<div class="a" style="left:107px;top:534px;width:113px;height:18px;background:#d3d3d3"></div>
<div class="t" style="left:109px;top:536.0px;font-size:12.6px;color:#000;"><span style="display:inline-block;transform:scaleX(0.93);transform-origin:left">Transfer function</span></div>
<div class="t" style="left:40px;top:549.5px;font-size:12.6px;color:#000;"><span style="display:inline-block;transform:scaleX(0.93);transform-origin:left">No of freqs</span></div>
<div class="t" style="left:125px;top:550.0px;font-size:12.6px;color:#000;"><span style="display:inline-block;transform:scaleX(0.93);transform-origin:left">Stim index</span></div>
<div class="num" style="left:39px;top:566px;width:54px;height:22px"></div>
<div class="a" style="left:42px;top:569px;width:48px;height:17px;background:#d3d3d3"></div>
<div class="t" style="left:44px;top:570.5px;font-size:12.6px;color:#000;"><span style="display:inline-block;transform:scaleX(0.85);transform-origin:left">1000</span></div>
<div class="num" style="left:124px;top:566px;width:54px;height:22px"></div>
<div class="a" style="left:127px;top:569px;width:48px;height:17px;background:#d3d3d3"></div>
<div class="t" style="left:129px;top:570.5px;font-size:12.6px;color:#000;"><span style="display:inline-block;transform:scaleX(0.85);transform-origin:left">6</span></div>
<div class="a" style="left:35px;top:600px;width:48px;height:44px;border-radius:50%;background:radial-gradient(circle at 50% 45%,#d8d8d8,#c6c6c6 70%,#b0b0b0);border:2px solid #2a2a2a;box-shadow:inset 1px 1px 0 #f0f0f0, inset -1px -1px 0 #808080"></div>
<div class="t" style="left:-141px;width:400px;text-align:center;top:608.5px;font-size:12.6px;color:#ff1010;"><span style="display:inline-block;transform:scaleX(0.88);transform-origin:center">HDWE</span></div>
<div class="t" style="left:-141px;width:400px;text-align:center;top:622.5px;font-size:12.6px;color:#ff1010;"><span style="display:inline-block;transform:scaleX(0.88);transform-origin:center">RESET</span></div>
<div class="a" style="left:92px;top:606px;width:48px;height:36px;background:#90f4f8;border:1px solid #3a3a3a;box-shadow:inset 2px 2px 0 #c8ffff, inset -2px -2px 0 #50a8b0"></div>
<div class="t" style="left:-84px;width:400px;text-align:center;top:609.5px;font-size:12.6px;color:#101040;"><span style="display:inline-block;transform:scaleX(0.88);transform-origin:center">EQUIP</span></div>
<div class="t" style="left:-84px;width:400px;text-align:center;top:624.5px;font-size:12.6px;color:#101040;"><span style="display:inline-block;transform:scaleX(0.88);transform-origin:center">SETUP</span></div>
<div class="a" style="left:152px;top:606px;width:71px;height:36px;border-radius:18px;background:#ff00ff;border:1.5px solid #222;box-shadow:inset 1px 1px 0 #ff90ff, inset -1px -2px 0 #a000a0"></div>
<div class="t" style="left:-12.5px;width:400px;text-align:center;top:617.0px;font-size:12.6px;color:#2a1060;"><span style="display:inline-block;transform:scaleX(0.88);transform-origin:center">CALIBRATE</span></div>
<div class="a" style="left:248px;top:270px;width:72px;height:31px;background:#c2c2c2;border:1px solid #222;background:linear-gradient(180deg,#d4d4d4,#c4c4c4);box-shadow:inset 2px 2px 0 #e4e4e4, inset -3px -3px 0 #8e8e8e, inset 4px 4px 2px #d8d8d8;"></div>
<div class="t" style="left:84.0px;width:400px;text-align:center;top:278.5px;font-size:12.6px;color:#000;"><span style="display:inline-block;transform:scaleX(0.88);transform-origin:center">MEASURE</span></div>
<div class="a" style="left:331.0px;top:269.0px;width:19px;height:19px;border-radius:50%;background:radial-gradient(circle at 65% 70%, #f0f0f0 0%, #c8c8c8 60%, #a0a0a0 100%)"></div>
<div class="a" style="left:332.0px;top:270.0px;width:16px;height:16px;border-radius:50%;background:radial-gradient(circle at 45% 40%, #4f7a3a 0%, #1f4a12 55%, #0c2006 100%)"></div>
<div class="t" style="left:357px;top:272.5px;font-size:12.6px;color:#000;"><span style="display:inline-block;transform:scaleX(0.93);transform-origin:left">Equipment on</span></div>
<div class="t" style="left:256px;top:302.0px;font-size:12.6px;color:#000;"><span style="display:inline-block;transform:scaleX(0.93);transform-origin:left">Meas. series</span></div>
<div class="a" style="left:259px;top:319px;width:50px;height:21px;border-radius:50%;background:#8a8a8a"></div>
<div class="a" style="left:258px;top:318px;width:48px;height:18px;border-radius:50%;background:linear-gradient(180deg,#f4f4f4,#d0d0d0);border:1px solid #333"></div>
<svg class="a" style="left:285px;top:321px" width="14" height="12"><path d="M1,1 L11,6 L1,11 Z" fill="#2e6e2a"/></svg>
<div class="a" style="left:241px;top:342px;width:215px;height:144px;border-style:solid;border-width:2px 1px 1px 2px;border-color:#7a7a7a #e0e0e0 #e0e0e0 #7a7a7a"></div>
<div class="t" style="left:254px;top:346.0px;font-size:12.6px;color:#000;"><span style="display:inline-block;transform:scaleX(0.93);transform-origin:left">Number of averages</span></div>
<div class="a" style="left:244px;top:360px;width:12px;height:24px;border-radius:50%;background:linear-gradient(90deg,#9a9a9a 0%,#e4e4e4 40%,#c0c0c0 100%);border:1px solid #8c8c8c"></div>
<div class="a" style="left:245px;top:371.5px;width:10px;height:1.0px;background:#8a8a8a"></div>
<svg class="a" style="left:244px;top:360px" width="12" height="24"><path d="M3.0,9.120000000000001 L6.0,4.800000000000001 L9.0,9.120000000000001 M3.0,14.879999999999999 L6.0,19.200000000000003 L9.0,14.879999999999999" stroke="#555" stroke-width="1" fill="none"/></svg>
<div class="num" style="left:256px;top:363px;width:50px;height:21px"></div>
<div class="a" style="left:259px;top:366px;width:44px;height:16px;background:#fafafa"></div>
<div class="t" style="left:261px;top:367.0px;font-size:12.6px;color:#000;"><span style="display:inline-block;transform:scaleX(0.85);transform-origin:left">100</span></div>
<div class="t" style="left:249px;top:429.0px;font-size:12.6px;color:#000;"><span style="display:inline-block;transform:scaleX(0.93);transform-origin:left">Measurement</span></div>
<div class="t" style="left:363px;top:429.0px;font-size:12.6px;color:#000;"><span style="display:inline-block;transform:scaleX(0.93);transform-origin:left">Independent</span></div>
<div class="a" style="left:678px;top:271px;width:206px;height:108px;border:1px solid #6e6e6e;"></div>
<div class="a" style="left:679px;top:272px;width:204px;height:106px;border:1px solid #d6d6d6;"></div>
<div class="a" style="left:686px;top:275px;width:61px;height:45px;background:#c2c2c2;border:2px solid #1a1a1a;background:linear-gradient(180deg,#d4d4d4,#c4c4c4);box-shadow:inset 2px 2px 0 #e4e4e4, inset -3px -3px 0 #8e8e8e, inset 4px 4px 2px #d8d8d8;"></div>
<div class="t" style="left:516.5px;width:400px;text-align:center;top:283.0px;font-size:12.6px;color:#000;"><span style="display:inline-block;transform:scaleX(0.88);transform-origin:center">CLEAR</span></div>
<div class="t" style="left:516.5px;width:400px;text-align:center;top:298.0px;font-size:12.6px;color:#000;"><span style="display:inline-block;transform:scaleX(0.88);transform-origin:center">GRAPH</span></div>
<div class="a" style="left:758px;top:277px;width:44px;height:40px;background:#fff;border:1px solid #000;"></div>
<div class="t" style="left:580.0px;width:400px;text-align:center;top:284.0px;font-size:12.6px;color:#000;"><span style="display:inline-block;transform:scaleX(0.88);transform-origin:center">ADD</span></div>
<div class="t" style="left:580.0px;width:400px;text-align:center;top:299.0px;font-size:12.6px;color:#000;"><span style="display:inline-block;transform:scaleX(0.88);transform-origin:center">FILE</span></div>
<div class="a" style="left:811px;top:279px;width:61px;height:40px;background:#ff8010;border:0px solid #000;"></div>
<div class="t" style="left:641.5px;width:400px;text-align:center;top:286.5px;font-size:12.6px;color:#000;"><span style="display:inline-block;transform:scaleX(0.88);transform-origin:center">RATIO OF</span></div>
<div class="t" style="left:641.5px;width:400px;text-align:center;top:301.5px;font-size:12.6px;color:#000;"><span style="display:inline-block;transform:scaleX(0.88);transform-origin:center">FILES</span></div>
<div class="a" style="left:811px;top:327px;width:61px;height:40px;background:#ffff00;border:0px solid #000;"></div>
<div class="t" style="left:641.5px;width:400px;text-align:center;top:334.5px;font-size:12.6px;color:#000;"><span style="display:inline-block;transform:scaleX(0.88);transform-origin:center">CHANNEL</span></div>
<div class="t" style="left:641.5px;width:400px;text-align:center;top:349.5px;font-size:12.6px;color:#000;"><span style="display:inline-block;transform:scaleX(0.88);transform-origin:center">MATH</span></div>
<div class="t" style="left:695px;top:321.0px;font-size:12.6px;color:#000;"><span style="display:inline-block;transform:scaleX(0.93);transform-origin:left">Filename</span></div>
<div class="t" style="left:697px;top:334.0px;font-size:12.6px;color:#000;"><span style="display:inline-block;transform:scaleX(0.93);transform-origin:left">just measured</span></div>
<div class="num" style="left:689px;top:349px;width:101px;height:24px"></div>
<div class="a" style="left:692px;top:352px;width:95px;height:19px;background:#d3d3d3"></div>
<div class="t" style="left:694px;top:354.5px;font-size:12.6px;color:#000;"><span style="display:inline-block;transform:scaleX(0.93);transform-origin:left">f4.txt</span></div>
<div class="t" style="left:679px;top:382.5px;font-size:12.6px;color:#000;"><span style="display:inline-block;transform:scaleX(0.93);transform-origin:left">Quit meas sys</span></div>
<div class="a" style="left:684px;top:399px;width:56px;height:36px;background:#c2c2c2;border:2px solid #1a1a1a;background:linear-gradient(180deg,#d4d4d4,#c4c4c4);box-shadow:inset 2px 2px 0 #e4e4e4, inset -3px -3px 0 #8e8e8e, inset 4px 4px 2px #d8d8d8;"></div>
<div class="t" style="left:512.0px;width:400px;text-align:center;top:411.0px;font-size:12.6px;color:#ff1010;"><span style="display:inline-block;transform:scaleX(0.88);transform-origin:center">STOP</span></div>
<div class="a" style="left:259.0px;top:487.0px;width:25px;height:25px;border-radius:50%;background:radial-gradient(circle at 65% 70%, #f0f0f0 0%, #c8c8c8 60%, #a0a0a0 100%)"></div>
<div class="a" style="left:260.0px;top:488.0px;width:22px;height:22px;border-radius:50%;background:radial-gradient(circle at 45% 40%, #4f7a3a 0%, #1f4a12 55%, #0c2006 100%)"></div>
<div class="t" style="left:291px;top:491.5px;font-size:12.6px;color:#000;"><span style="display:inline-block;transform:scaleX(0.93);transform-origin:left">Save waveform</span></div>
<div class="t" style="left:266px;top:515.5px;font-size:12.6px;color:#000;"><span style="display:inline-block;transform:scaleX(0.93);transform-origin:left">AI Channels</span></div>
<div class="num" style="left:256px;top:530px;width:197px;height:25px"></div>
<div class="a" style="left:259px;top:533px;width:191px;height:20px;background:#c8c8c8"></div>
<div class="a" style="left:269px;top:534px;width:162px;height:18px;background:#fcfcfc"></div>
<svg class="a" style="left:259px;top:533px" width="10" height="19"><text x="1" y="9" font-family="Liberation Serif" font-size="9">I</text><path d="M1,15 L8,5" stroke="#000" stroke-width="1"/><text x="4" y="17" font-family="Liberation Sans" font-size="8">0</text></svg>
<div class="t" style="left:271px;top:536.0px;font-size:12.6px;color:#000;"><span style="display:inline-block;transform:scaleX(0.93);transform-origin:left">PXI1Slot3/ai0:3</span></div>
<div class="a" style="left:434px;top:534px;width:16px;height:18px;background:#c8c8c8;border:1px solid #7c7c7c;box-shadow:inset 1px 1px 0 #eee"></div>
<svg class="a" style="left:437px;top:539.5px" width="11" height="7"><path d="M1,1 L10,1 L5.5,6 Z" fill="#111"/></svg>
<div class="t" style="left:257px;top:556.5px;font-size:12.6px;color:#000;"><span style="display:inline-block;transform:scaleX(0.93);transform-origin:left">no. chans</span></div>
<div class="num" style="left:257px;top:571px;width:53px;height:23px"></div>
<div class="a" style="left:260px;top:574px;width:47px;height:18px;background:#d3d3d3"></div>
<div class="t" style="left:262px;top:576.0px;font-size:12.6px;color:#000;"><span style="display:inline-block;transform:scaleX(0.85);transform-origin:left">4</span></div>
<div class="t" style="left:333px;top:557.0px;font-size:12.6px;color:#000;"><span style="display:inline-block;transform:scaleX(0.93);transform-origin:left">Pre-meas delay (msec)</span></div>
<div class="a" style="left:321px;top:571px;width:13px;height:24px;border-radius:50%;background:linear-gradient(90deg,#9a9a9a 0%,#e4e4e4 40%,#c0c0c0 100%);border:1px solid #8c8c8c"></div>
<div class="a" style="left:322px;top:582.5px;width:11px;height:1.0px;background:#8a8a8a"></div>
<svg class="a" style="left:321px;top:571px" width="13" height="24"><path d="M3.5,9.120000000000001 L6.5,4.800000000000001 L9.5,9.120000000000001 M3.5,14.879999999999999 L6.5,19.200000000000003 L9.5,14.879999999999999" stroke="#555" stroke-width="1" fill="none"/></svg>
<div class="num" style="left:334px;top:572px;width:50px;height:23px"></div>
<div class="a" style="left:337px;top:575px;width:44px;height:18px;background:#fafafa"></div>
<div class="t" style="left:339px;top:577.0px;font-size:12.6px;color:#000;"><span style="display:inline-block;transform:scaleX(0.85);transform-origin:left">100</span></div>
<div class="t" style="left:466px;top:511.5px;font-size:12.6px;color:#000;"><span style="display:inline-block;transform:scaleX(0.93);transform-origin:left">AO Channels</span></div>
<div class="num" style="left:464px;top:529px;width:168px;height:24px"></div>
<div class="a" style="left:467px;top:532px;width:162px;height:19px;background:#c8c8c8"></div>
<div class="a" style="left:477px;top:533px;width:152px;height:17px;background:#fcfcfc"></div>
<svg class="a" style="left:467px;top:532px" width="10" height="19"><text x="1" y="9" font-family="Liberation Serif" font-size="9">I</text><path d="M1,15 L8,5" stroke="#000" stroke-width="1"/><text x="4" y="17" font-family="Liberation Sans" font-size="8">0</text></svg>
<div class="t" style="left:479px;top:534.5px;font-size:12.6px;color:#000;"><span style="display:inline-block;transform:scaleX(0.93);transform-origin:left">PXI1Slot2/ao0</span></div>
<div class="t" style="left:465px;top:554.0px;font-size:12.6px;color:#000;"><span style="display:inline-block;transform:scaleX(0.93);transform-origin:left">Output level (V peak)</span></div>
<div class="num" style="left:464px;top:570px;width:54px;height:23px"></div>
<div class="a" style="left:467px;top:573px;width:48px;height:18px;background:#d3d3d3"></div>
<div class="t" style="left:469px;top:575.0px;font-size:12.6px;color:#000;"><span style="display:inline-block;transform:scaleX(0.85);transform-origin:left">1.00000</span></div>
<div class="t" style="left:706px;top:514.0px;font-size:12.6px;color:#000;"><span style="display:inline-block;transform:scaleX(0.93);transform-origin:left">Mic calib file</span></div>
<div class="a" style="left:782.0px;top:502.0px;width:19px;height:19px;border-radius:50%;background:radial-gradient(circle at 65% 70%, #f0f0f0 0%, #c8c8c8 60%, #a0a0a0 100%)"></div>
<div class="a" style="left:783.0px;top:503.0px;width:16px;height:16px;border-radius:50%;background:radial-gradient(circle at 45% 40%, #4f7a3a 0%, #1f4a12 55%, #0c2006 100%)"></div>
<div class="num" style="left:706px;top:531px;width:178px;height:59px"></div>
<div class="a" style="left:709px;top:534px;width:172px;height:54px;background:#d3d3d3"></div>
<div class="a" style="left:709px;top:534px;width:8px;height:54px;background:#a8a8a8"></div>
<svg class="a" style="left:710px;top:554.5px" width="9" height="12"><rect x="1.5" y="1.5" width="3" height="3" fill="none" stroke="#000" stroke-width="1.3"/><rect x="4.5" y="6.5" width="3.5" height="3.5" fill="#fff" stroke="#000" stroke-width="1.3"/><path d="M3,4.5 V8 H4.5" stroke="#000" fill="none"/></svg>
<div class="t" style="left:31px;top:905.0px;font-size:12.6px;color:#000;"><span style="display:inline-block;transform:scaleX(0.93);transform-origin:left">AO board?</span></div>
<div class="a" style="left:31.0px;top:917.0px;width:19px;height:19px;border-radius:50%;background:radial-gradient(circle at 65% 70%, #f0f0f0 0%, #c8c8c8 60%, #a0a0a0 100%)"></div>
<div class="a" style="left:32.0px;top:918.0px;width:16px;height:16px;border-radius:50%;background:radial-gradient(circle at 45% 40%, #b0ff90 0%, #48e020 55%, #0c2006 100%)"></div>
<div class="t" style="left:31px;top:936.0px;font-size:12.6px;color:#000;"><span style="display:inline-block;transform:scaleX(0.93);transform-origin:left">Extern trig</span></div>
<div class="a" style="left:31.0px;top:948.0px;width:19px;height:19px;border-radius:50%;background:radial-gradient(circle at 65% 70%, #f0f0f0 0%, #c8c8c8 60%, #a0a0a0 100%)"></div>
<div class="a" style="left:32.0px;top:949.0px;width:16px;height:16px;border-radius:50%;background:radial-gradient(circle at 45% 40%, #4f7a3a 0%, #1f4a12 55%, #0c2006 100%)"></div>
<div class="a" style="left:31.0px;top:995.0px;width:19px;height:19px;border-radius:50%;background:radial-gradient(circle at 65% 70%, #f0f0f0 0%, #c8c8c8 60%, #a0a0a0 100%)"></div>
<div class="a" style="left:32.0px;top:996.0px;width:16px;height:16px;border-radius:50%;background:radial-gradient(circle at 45% 40%, #4f7a3a 0%, #1f4a12 55%, #0c2006 100%)"></div>
<div class="t" style="left:53px;top:990.5px;font-size:12.6px;color:#000;"><span style="display:inline-block;transform:scaleX(0.93);transform-origin:left">AI ch1</span></div>
<div class="a" style="left:50px;top:1002px;width:100px;height:12px;overflow:hidden"><div class="t" style="left:3px;top:2px;font-size:12.6px"><span style="display:inline-block;transform:scaleX(0.93);transform-origin:left">correction</span></div></div>
<div class="t" style="left:153px;top:938.0px;font-size:12.6px;color:#000;"><span style="display:inline-block;transform:scaleX(0.93);transform-origin:left">AO board</span></div>
<div class="t" style="left:237px;top:938.5px;font-size:12.6px;color:#000;"><span style="display:inline-block;transform:scaleX(0.88);transform-origin:left">GPIB</span></div>
<div class="num" style="left:152px;top:953px;width:74px;height:24px"></div>
<div class="a" style="left:155px;top:956px;width:68px;height:19px;background:#d3d3d3"></div>
<div class="t" style="left:157px;top:958.5px;font-size:12.6px;color:#000;"><span style="display:inline-block;transform:scaleX(0.88);transform-origin:left">PXI 4461</span></div>
<div class="num" style="left:236px;top:953px;width:103px;height:24px"></div>
<div class="a" style="left:239px;top:956px;width:97px;height:19px;background:#d3d3d3"></div>
<div class="t" style="left:241px;top:958.5px;font-size:12.6px;color:#000;"><span style="display:inline-block;transform:scaleX(0.93);transform-origin:left">None</span></div>
<div class="t" style="left:153px;top:975.0px;font-size:12.6px;color:#000;"><span style="display:inline-block;transform:scaleX(0.93);transform-origin:left">AI board</span></div>
<div class="t" style="left:237px;top:976.5px;font-size:12.6px;color:#000;"><span style="display:inline-block;transform:scaleX(0.88);transform-origin:left">USB</span></div>
<div class="num" style="left:152px;top:992px;width:74px;height:24px"></div>
<div class="a" style="left:155px;top:995px;width:68px;height:19px;background:#d3d3d3"></div>
<div class="t" style="left:157px;top:997.5px;font-size:12.6px;color:#000;"><span style="display:inline-block;transform:scaleX(0.88);transform-origin:left">PXI 6122</span></div>
<div class="num" style="left:236px;top:992px;width:103px;height:24px"></div>
<div class="a" style="left:239px;top:995px;width:97px;height:19px;background:#d3d3d3"></div>
<div class="t" style="left:241px;top:997.5px;font-size:12.6px;color:#000;"><span style="display:inline-block;transform:scaleX(0.93);transform-origin:left">None</span></div>
<div class="a" style="left:26px;top:684px;width:327px;height:216px;background:#bfbfbf;border-top:2px solid #d4d4d4;border-bottom:2px solid #8c8c8c"></div>
<div class="a" style="left:26px;top:686px;width:13px;height:212px;background:linear-gradient(90deg,#b4b4b4,#d6d6d6 40%,#cdcdcd 75%,#c2c2c2 100%)"></div>
<div class="a" style="left:343px;top:684px;width:10px;height:216px;background:linear-gradient(90deg,#bfbfbf,#a8a8a8 60%,#8e8e8e 90%,#3c3c3c 100%)"></div>
<svg class="a" style="left:93px;top:694px" width="237" height="168" shape-rendering="crispEdges"><rect width="237" height="168" fill="#000"/><line x1="0" y1="6.5" x2="237" y2="6.5" stroke="#003e00"/><line x1="0" y1="12.5" x2="237" y2="12.5" stroke="#003e00"/><line x1="0" y1="17.5" x2="237" y2="17.5" stroke="#003e00"/><line x1="0" y1="23.5" x2="237" y2="23.5" stroke="#003e00"/><line x1="0" y1="28.5" x2="237" y2="28.5" stroke="#003e00"/><line x1="0" y1="34.5" x2="237" y2="34.5" stroke="#003e00"/><line x1="0" y1="39.5" x2="237" y2="39.5" stroke="#003e00"/><line x1="0" y1="45.5" x2="237" y2="45.5" stroke="#003e00"/><line x1="0" y1="50.5" x2="237" y2="50.5" stroke="#003e00"/><line x1="0" y1="62.5" x2="237" y2="62.5" stroke="#003e00"/><line x1="0" y1="67.5" x2="237" y2="67.5" stroke="#003e00"/><line x1="0" y1="73.5" x2="237" y2="73.5" stroke="#003e00"/><line x1="0" y1="78.5" x2="237" y2="78.5" stroke="#003e00"/><line x1="0" y1="84.5" x2="237" y2="84.5" stroke="#003e00"/><line x1="0" y1="89.5" x2="237" y2="89.5" stroke="#003e00"/><line x1="0" y1="95.5" x2="237" y2="95.5" stroke="#003e00"/><line x1="0" y1="100.5" x2="237" y2="100.5" stroke="#003e00"/><line x1="0" y1="106.5" x2="237" y2="106.5" stroke="#003e00"/><line x1="0" y1="117.5" x2="237" y2="117.5" stroke="#003e00"/><line x1="0" y1="123.5" x2="237" y2="123.5" stroke="#003e00"/><line x1="0" y1="128.5" x2="237" y2="128.5" stroke="#003e00"/><line x1="0" y1="134.5" x2="237" y2="134.5" stroke="#003e00"/><line x1="0" y1="139.5" x2="237" y2="139.5" stroke="#003e00"/><line x1="0" y1="145.5" x2="237" y2="145.5" stroke="#003e00"/><line x1="0" y1="150.5" x2="237" y2="150.5" stroke="#003e00"/><line x1="0" y1="156.5" x2="237" y2="156.5" stroke="#003e00"/><line x1="0" y1="161.5" x2="237" y2="161.5" stroke="#003e00"/><line x1="10.5" y1="0" x2="10.5" y2="168" stroke="#003e00"/><line x1="19.5" y1="0" x2="19.5" y2="168" stroke="#003e00"/><line x1="29.5" y1="0" x2="29.5" y2="168" stroke="#003e00"/><line x1="38.5" y1="0" x2="38.5" y2="168" stroke="#003e00"/><line x1="48.5" y1="0" x2="48.5" y2="168" stroke="#003e00"/><line x1="57.5" y1="0" x2="57.5" y2="168" stroke="#003e00"/><line x1="67.5" y1="0" x2="67.5" y2="168" stroke="#003e00"/><line x1="76.5" y1="0" x2="76.5" y2="168" stroke="#003e00"/><line x1="85.5" y1="0" x2="85.5" y2="168" stroke="#003e00"/><line x1="95.5" y1="0" x2="95.5" y2="168" stroke="#003e00"/><line x1="104.5" y1="0" x2="104.5" y2="168" stroke="#003e00"/><line x1="114.5" y1="0" x2="114.5" y2="168" stroke="#003e00"/><line x1="123.5" y1="0" x2="123.5" y2="168" stroke="#003e00"/><line x1="133.5" y1="0" x2="133.5" y2="168" stroke="#003e00"/><line x1="142.5" y1="0" x2="142.5" y2="168" stroke="#003e00"/><line x1="152.5" y1="0" x2="152.5" y2="168" stroke="#003e00"/><line x1="161.5" y1="0" x2="161.5" y2="168" stroke="#003e00"/><line x1="170.5" y1="0" x2="170.5" y2="168" stroke="#003e00"/><line x1="180.5" y1="0" x2="180.5" y2="168" stroke="#003e00"/><line x1="189.5" y1="0" x2="189.5" y2="168" stroke="#003e00"/><line x1="199.5" y1="0" x2="199.5" y2="168" stroke="#003e00"/><line x1="208.5" y1="0" x2="208.5" y2="168" stroke="#003e00"/><line x1="218.5" y1="0" x2="218.5" y2="168" stroke="#003e00"/><line x1="227.5" y1="0" x2="227.5" y2="168" stroke="#003e00"/><line x1="0" y1="56.5" x2="237" y2="56.5" stroke="#006a00"/><line x1="0" y1="112.5" x2="237" y2="112.5" stroke="#006a00"/></svg>
<div class="a" style="left:92px;top:693px;width:238px;height:1px;background:#6a6a6a"></div>
<div class="a" style="left:92px;top:693px;width:1px;height:169px;background:#6a6a6a"></div>
<div class="a" style="left:92px;top:862px;width:239px;height:1px;background:#e4e4e4"></div>
<div class="a" style="left:330px;top:693px;width:1px;height:170px;background:#e4e4e4"></div>
<svg class="a" style="left:93px;top:694px" width="237" height="168"><polygon points="0.6,58.5 2.5,62.5 5.4,65.8 9.7,66.9 15.1,66.9 20.5,64.7 25.9,59.4 30.1,54.0 30.1,55.5 25.9,62.6 20.5,68.0 15.1,70.1 9.7,70.1 5.4,70.7 3.3,72.3 0.6,76.0" fill="#fff"/><path d="M0.6,76.0 L3.3,72.3 L5.4,70.7 L9.7,70.1 L15.1,70.1 L20.5,68.0 L25.9,62.6 L30.1,55.5 L33.4,44.5 L36.6,32.5 L39.8,16.5 L43.0,4.0" stroke="#ff4848" stroke-width="2" fill="none"/><path d="M30.1,54.0 L33.4,43.3 L36.6,31.4 L39.8,15.3 L43.0,2.4 L44.6,7.8 L46.3,23.9 L47.9,47.6 L49.5,71.2 L51.6,101.3 L53.8,64.7 L54.9,28.2 L55.6,7.3 L57.0,7.8 L58.6,100.2 L59.3,102.2 L61.4,10.0 L62.5,10.0 L63.4,104.4 L65.2,11.0 L66.3,106.5 L67.3,14.2" stroke="#fff" stroke-width="1.3" fill="none"/><path d="M66.8,104.8 L68.9,106.0 L72.2,108.0 L76.5,110.2 L82.9,112.8 L87.2,113.9 L92.6,115.5" stroke="#ff4040" stroke-width="2" fill="none"/><polygon points="67.3,14.2 70.0,13.2 74.3,15.3 78.6,17.5 82.9,18.0 87.2,20.7 89.3,21.8 92.6,20.1 93.6,21.8 94.2,45.4 95.6,62.5 95.6,75.4 94.2,87.2 93.1,108.7 92.6,114.0 87.2,112.4 82.9,111.3 76.5,108.7 72.2,106.5 68.9,104.4 66.8,103.3" fill="#fff"/></svg>
<div class="a" style="left:87px;top:695px;width:5px;height:1px;background:#000"></div>
<div class="t" style="right:1562px;top:688.0px;font-size:12.4px;color:#000;"><span style="display:inline-block;transform:scaleX(0.85);transform-origin:right">0.1</span></div>
<div class="a" style="left:87px;top:750px;width:5px;height:1px;background:#000"></div>
<div class="t" style="right:1562px;top:743.0px;font-size:12.4px;color:#000;"><span style="display:inline-block;transform:scaleX(0.85);transform-origin:right">0.0</span></div>
<div class="a" style="left:87px;top:805px;width:5px;height:1px;background:#000"></div>
<div class="t" style="right:1562px;top:798.0px;font-size:12.4px;color:#000;"><span style="display:inline-block;transform:scaleX(0.85);transform-origin:right">-0.1</span></div>
<div class="a" style="left:87px;top:860px;width:5px;height:1px;background:#000"></div>
<div class="t" style="right:1562px;top:853.0px;font-size:12.4px;color:#000;"><span style="display:inline-block;transform:scaleX(0.85);transform-origin:right">-0.2</span></div>
<div class="a" style="left:93px;top:863px;width:1px;height:5px;background:#000"></div>
<div class="t" style="left:-107px;width:400px;text-align:center;top:868.5px;font-size:12.4px;color:#000;"><span style="display:inline-block;transform:scaleX(0.85);transform-origin:center"></span></div>
<div class="a" style="left:328px;top:863px;width:1px;height:5px;background:#000"></div>
<div class="t" style="left:128px;width:400px;text-align:center;top:868.5px;font-size:12.4px;color:#000;"><span style="display:inline-block;transform:scaleX(0.85);transform-origin:center"></span></div>
<div class="t" style="left:-107px;width:400px;text-align:center;top:868.5px;font-size:12.4px;color:#000;"><span style="display:inline-block;transform:scaleX(0.85);transform-origin:center">0.000</span></div>
<div class="t" style="left:128px;width:400px;text-align:center;top:868.5px;font-size:12.4px;color:#000;"><span style="display:inline-block;transform:scaleX(0.85);transform-origin:center">25.000m</span></div>
<div class="t" style="left:-44px;top:770px;width:200px;text-align:center;font-size:12.6px;transform:rotate(-90deg) scaleX(0.93)">Amplitude</div>
<div class="t" style="left:30px;top:882.0px;font-size:12.6px;color:#000;"><span style="display:inline-block;transform:scaleX(0.93);transform-origin:left">Waveform Graph mean</span></div>
<div class="t" style="left:197.5px;top:885.5px;font-size:12.6px;color:#000;"><span style="display:inline-block;transform:scaleX(0.93);transform-origin:left">Time</span></div>
<div class="a" style="left:240px;top:600px;width:113px;height:92px;background:#c2c2c2;border-top:1px solid #d8d8d8;border-bottom:1px solid #9a9a9a"></div>
<div class="a" style="left:240px;top:600px;width:11px;height:92px;background:linear-gradient(90deg,#a8a8a8,#d6d6d6 50%,#c6c6c6)"></div>
<div class="a" style="left:341px;top:600px;width:12px;height:92px;background:linear-gradient(90deg,#c2c2c2,#aaaaaa 55%,#8c8c8c 80%,#6e6e6e)"></div>
<div class="t" style="left:255px;top:604.0px;font-size:12.6px;color:#000;"><span style="display:inline-block;transform:scaleX(0.93);transform-origin:left">chan 0</span></div>
<svg class="a" style="left:309px;top:602px" width="29" height="18"><rect width="29" height="18" fill="#000"/><rect x="0" y="17" width="29" height="1" fill="#d8d8d8"/><rect x="28" y="0" width="1" height="18" fill="#d8d8d8"/><path d="M1.5,13.5 L12,2.5 L22.5,13.5 L25.5,10" stroke="#fff" stroke-width="1" fill="none"/></svg>
<div class="t" style="left:255px;top:627.0px;font-size:12.6px;color:#000;"><span style="display:inline-block;transform:scaleX(0.93);transform-origin:left">chan 1</span></div>
<svg class="a" style="left:309px;top:625px" width="29" height="18"><rect width="29" height="18" fill="#000"/><rect x="0" y="17" width="29" height="1" fill="#d8d8d8"/><rect x="28" y="0" width="1" height="18" fill="#d8d8d8"/><path d="M1.5,13.5 L12,2.5 L22.5,13.5 L25.5,10" stroke="#ff3030" stroke-width="1" fill="none"/></svg>
<div class="t" style="left:255px;top:650.0px;font-size:12.6px;color:#000;"><span style="display:inline-block;transform:scaleX(0.93);transform-origin:left">chan 2</span></div>
<svg class="a" style="left:309px;top:648px" width="29" height="18"><rect width="29" height="18" fill="#000"/><rect x="0" y="17" width="29" height="1" fill="#d8d8d8"/><rect x="28" y="0" width="1" height="18" fill="#d8d8d8"/><path d="M1.5,13.5 L10,3 L18.5,13.5 L25.5,3.5" stroke="#20f020" stroke-width="1" fill="none"/></svg>
<div class="t" style="left:255px;top:673.0px;font-size:12.6px;color:#000;"><span style="display:inline-block;transform:scaleX(0.93);transform-origin:left">chan 3</span></div>
<svg class="a" style="left:309px;top:671px" width="29" height="18"><rect width="29" height="18" fill="#000"/><rect x="0" y="17" width="29" height="1" fill="#d8d8d8"/><rect x="28" y="0" width="1" height="18" fill="#d8d8d8"/><path d="M1.5,13.5 L10,3 L18.5,13.5 L25.5,3.5" stroke="#30a0ff" stroke-width="1" fill="none"/></svg>
<div class="a" style="left:150px;top:660px;width:89px;height:25px;background:linear-gradient(90deg,#b8b8b8 0%,#d6d6d6 8%,#cfcfcf 18%,#c4c4c4 80%,#a8a8a8 92%,#8c8c8c 100%);border-top:1px solid #dedede;border-bottom:2px solid #8e8e8e"></div>
<div class="a" style="left:165px;top:665px;width:18px;height:16px;background:#c2c2c2;border:1px solid;border-color:#dcdcdc #8a8a8a #8a8a8a #dcdcdc"></div>
<svg class="a" style="left:165px;top:665px" width="18" height="16"><rect x="2" y="2.5" width="3" height="3" fill="#2a6a2a"/><path d="M3.0,9.0 H15.0 M9.0,3.0 V15.0" stroke="#000" stroke-width="1.3"/><circle cx="9.0" cy="9.0" r="1.4" fill="#fff" stroke="#000" stroke-width="0.9"/></svg>
<div class="a" style="left:185px;top:665px;width:20px;height:16px;background:#8e8e8e;border:1px solid;border-color:#5a5a5a #9a9a9a #9a9a9a #5a5a5a"></div>
<svg class="a" style="left:185px;top:665px" width="20" height="16"><rect x="2" y="2.5" width="3" height="3" fill="#40ff40"/><circle cx="13.0" cy="6.0" r="3.8" fill="#dcdcf4" stroke="#000" stroke-width="1.1"/><path d="M13.0,3.8 V8.2 M10.8,6.0 H15.2" stroke="#000" stroke-width="1.1"/><path d="M10.0,9.0 L4.5,14.5" stroke="#000" stroke-width="2.4"/><path d="M10.0,9.0 L4.5,14.5" stroke="#ddd" stroke-width="0.8"/><path d="M12.5,12.5 H17.0 L14.75,15.0Z" fill="#000"/></svg>
<div class="a" style="left:206px;top:665px;width:19px;height:16px;background:#c2c2c2;border:1px solid;border-color:#dcdcdc #8a8a8a #8a8a8a #dcdcdc"></div>
<svg class="a" style="left:206px;top:665px" width="19" height="16"><rect x="2" y="2.5" width="3" height="3" fill="#2a6a2a"/><g transform="translate(3.0,0.5)" stroke-linecap="round"><path d="M5,9 V4 M7,8.5 V2.6 M9,8.5 V3 M11,9 V4.6 M4.2,11 L2,8" stroke="#000" stroke-width="2.6" fill="none"/><path d="M4,9 Q4,14.5 7.5,14.5 Q11.5,14.5 11.5,10 V8.5 H4Z" fill="#fff" stroke="#000" stroke-width="1"/><path d="M5,9.5 V4 M7,9.5 V2.6 M9,9.5 V3 M11,9.5 V4.6 M4.2,11 L2,8" stroke="#fff" stroke-width="0.9" fill="none"/></g></svg>
<div class="a" style="left:355px;top:600px;width:427px;height:229px;background:#bfbfbf;border-top:2px solid #d4d4d4;border-bottom:2px solid #8c8c8c"></div>
<div class="a" style="left:355px;top:602px;width:13px;height:225px;background:linear-gradient(90deg,#b4b4b4,#d6d6d6 40%,#cdcdcd 75%,#c2c2c2 100%)"></div>
<div class="a" style="left:772px;top:600px;width:10px;height:229px;background:linear-gradient(90deg,#bfbfbf,#a8a8a8 60%,#8e8e8e 90%,#3c3c3c 100%)"></div>
<svg class="a" style="left:436px;top:611px" width="322" height="180" shape-rendering="crispEdges"><rect width="322" height="180" fill="#000"/><line x1="0" y1="16.5" x2="322" y2="16.5" stroke="#003e00"/><line x1="0" y1="9.5" x2="322" y2="9.5" stroke="#003e00"/><line x1="0" y1="5.5" x2="322" y2="5.5" stroke="#003e00"/><line x1="0" y1="2.5" x2="322" y2="2.5" stroke="#003e00"/><line x1="0" y1="38.5" x2="322" y2="38.5" stroke="#003e00"/><line x1="0" y1="32.5" x2="322" y2="32.5" stroke="#003e00"/><line x1="0" y1="28.5" x2="322" y2="28.5" stroke="#003e00"/><line x1="0" y1="25.5" x2="322" y2="25.5" stroke="#003e00"/><line x1="0" y1="61.5" x2="322" y2="61.5" stroke="#003e00"/><line x1="0" y1="54.5" x2="322" y2="54.5" stroke="#003e00"/><line x1="0" y1="50.5" x2="322" y2="50.5" stroke="#003e00"/><line x1="0" y1="47.5" x2="322" y2="47.5" stroke="#003e00"/><line x1="0" y1="83.5" x2="322" y2="83.5" stroke="#003e00"/><line x1="0" y1="76.5" x2="322" y2="76.5" stroke="#003e00"/><line x1="0" y1="72.5" x2="322" y2="72.5" stroke="#003e00"/><line x1="0" y1="70.5" x2="322" y2="70.5" stroke="#003e00"/><line x1="0" y1="105.5" x2="322" y2="105.5" stroke="#003e00"/><line x1="0" y1="99.5" x2="322" y2="99.5" stroke="#003e00"/><line x1="0" y1="95.5" x2="322" y2="95.5" stroke="#003e00"/><line x1="0" y1="92.5" x2="322" y2="92.5" stroke="#003e00"/><line x1="0" y1="128.5" x2="322" y2="128.5" stroke="#003e00"/><line x1="0" y1="121.5" x2="322" y2="121.5" stroke="#003e00"/><line x1="0" y1="117.5" x2="322" y2="117.5" stroke="#003e00"/><line x1="0" y1="114.5" x2="322" y2="114.5" stroke="#003e00"/><line x1="0" y1="150.5" x2="322" y2="150.5" stroke="#003e00"/><line x1="0" y1="143.5" x2="322" y2="143.5" stroke="#003e00"/><line x1="0" y1="140.5" x2="322" y2="140.5" stroke="#003e00"/><line x1="0" y1="137.5" x2="322" y2="137.5" stroke="#003e00"/><line x1="0" y1="173.5" x2="322" y2="173.5" stroke="#003e00"/><line x1="0" y1="166.5" x2="322" y2="166.5" stroke="#003e00"/><line x1="0" y1="162.5" x2="322" y2="162.5" stroke="#003e00"/><line x1="0" y1="159.5" x2="322" y2="159.5" stroke="#003e00"/><line x1="25.5" y1="0" x2="25.5" y2="180" stroke="#003e00"/><line x1="39.5" y1="0" x2="39.5" y2="180" stroke="#003e00"/><line x1="49.5" y1="0" x2="49.5" y2="180" stroke="#003e00"/><line x1="57.5" y1="0" x2="57.5" y2="180" stroke="#003e00"/><line x1="63.5" y1="0" x2="63.5" y2="180" stroke="#003e00"/><line x1="69.5" y1="0" x2="69.5" y2="180" stroke="#003e00"/><line x1="73.5" y1="0" x2="73.5" y2="180" stroke="#003e00"/><line x1="77.5" y1="0" x2="77.5" y2="180" stroke="#003e00"/><line x1="105.5" y1="0" x2="105.5" y2="180" stroke="#003e00"/><line x1="119.5" y1="0" x2="119.5" y2="180" stroke="#003e00"/><line x1="129.5" y1="0" x2="129.5" y2="180" stroke="#003e00"/><line x1="137.5" y1="0" x2="137.5" y2="180" stroke="#003e00"/><line x1="143.5" y1="0" x2="143.5" y2="180" stroke="#003e00"/><line x1="148.5" y1="0" x2="148.5" y2="180" stroke="#003e00"/><line x1="153.5" y1="0" x2="153.5" y2="180" stroke="#003e00"/><line x1="157.5" y1="0" x2="157.5" y2="180" stroke="#003e00"/><line x1="185.5" y1="0" x2="185.5" y2="180" stroke="#003e00"/><line x1="199.5" y1="0" x2="199.5" y2="180" stroke="#003e00"/><line x1="209.5" y1="0" x2="209.5" y2="180" stroke="#003e00"/><line x1="217.5" y1="0" x2="217.5" y2="180" stroke="#003e00"/><line x1="223.5" y1="0" x2="223.5" y2="180" stroke="#003e00"/><line x1="228.5" y1="0" x2="228.5" y2="180" stroke="#003e00"/><line x1="233.5" y1="0" x2="233.5" y2="180" stroke="#003e00"/><line x1="237.5" y1="0" x2="237.5" y2="180" stroke="#003e00"/><line x1="265.5" y1="0" x2="265.5" y2="180" stroke="#003e00"/><line x1="279.5" y1="0" x2="279.5" y2="180" stroke="#003e00"/><line x1="289.5" y1="0" x2="289.5" y2="180" stroke="#003e00"/><line x1="296.5" y1="0" x2="296.5" y2="180" stroke="#003e00"/><line x1="303.5" y1="0" x2="303.5" y2="180" stroke="#003e00"/><line x1="308.5" y1="0" x2="308.5" y2="180" stroke="#003e00"/><line x1="313.5" y1="0" x2="313.5" y2="180" stroke="#003e00"/><line x1="317.5" y1="0" x2="317.5" y2="180" stroke="#003e00"/><line x1="0" y1="23.5" x2="322" y2="23.5" stroke="#006a00"/><line x1="0" y1="45.5" x2="322" y2="45.5" stroke="#006a00"/><line x1="0" y1="67.5" x2="322" y2="67.5" stroke="#006a00"/><line x1="0" y1="90.5" x2="322" y2="90.5" stroke="#006a00"/><line x1="0" y1="112.5" x2="322" y2="112.5" stroke="#006a00"/><line x1="0" y1="135.5" x2="322" y2="135.5" stroke="#006a00"/><line x1="0" y1="157.5" x2="322" y2="157.5" stroke="#006a00"/><line x1="81.5" y1="0" x2="81.5" y2="180" stroke="#006a00"/><line x1="161.5" y1="0" x2="161.5" y2="180" stroke="#006a00"/><line x1="241.5" y1="0" x2="241.5" y2="180" stroke="#006a00"/></svg>
<div class="a" style="left:435px;top:610px;width:323px;height:1px;background:#6a6a6a"></div>
<div class="a" style="left:435px;top:610px;width:1px;height:181px;background:#6a6a6a"></div>
<div class="a" style="left:435px;top:791px;width:324px;height:1px;background:#e4e4e4"></div>
<div class="a" style="left:758px;top:610px;width:1px;height:182px;background:#e4e4e4"></div>
<svg class="a" style="left:436px;top:611px" width="322" height="180"><path d="M0,16 L217.60000000000002,47 L217.60000000000002,98" stroke="#fff" stroke-width="1.5" fill="none"/><rect x="217" y="103.8" width="1" height="34.0" fill="#fff"/><rect x="218" y="102.4" width="1" height="26.4" fill="#fff"/><rect x="219" y="102.0" width="1" height="22.0" fill="#fff"/><rect x="219" y="99.0" width="1" height="4" fill="#ff4040"/><rect x="220" y="106.4" width="1" height="19.5" fill="#fff"/><rect x="221" y="102.3" width="1" height="40.3" fill="#fff"/><rect x="221" y="138.6" width="1" height="5.2" fill="#ff4040"/><rect x="222" y="103.7" width="1" height="20.1" fill="#fff"/><rect x="223" y="104.0" width="1" height="23.0" fill="#fff"/><rect x="224" y="105.7" width="1" height="23.9" fill="#fff"/><rect x="224" y="125.6" width="1" height="6.1" fill="#ff4040"/><rect x="225" y="101.9" width="1" height="21.9" fill="#fff"/><rect x="226" y="105.7" width="1" height="35.7" fill="#fff"/><rect x="227" y="106.4" width="1" height="18.8" fill="#fff"/><rect x="228" y="101.9" width="1" height="22.7" fill="#fff"/><rect x="229" y="102.1" width="1" height="41.7" fill="#fff"/><rect x="229" y="139.8" width="1" height="7.8" fill="#ff4040"/><rect x="230" y="102.5" width="1" height="23.8" fill="#fff"/><rect x="230" y="122.2" width="1" height="8.2" fill="#ff4040"/><rect x="230" y="99.5" width="1" height="4" fill="#ff4040"/><rect x="231" y="103.6" width="1" height="20.7" fill="#fff"/><rect x="232" y="105.9" width="1" height="36.8" fill="#fff"/><rect x="233" y="102.0" width="1" height="25.8" fill="#fff"/><rect x="234" y="103.0" width="1" height="29.8" fill="#fff"/><rect x="235" y="104.5" width="1" height="23.8" fill="#fff"/><rect x="236" y="105.8" width="1" height="33.2" fill="#fff"/><rect x="237" y="102.7" width="1" height="24.5" fill="#fff"/><rect x="237" y="123.2" width="1" height="9.8" fill="#ff4040"/><rect x="238" y="104.5" width="1" height="29.2" fill="#fff"/><rect x="238" y="129.7" width="1" height="5.2" fill="#ff4040"/><rect x="239" y="102.7" width="1" height="21.8" fill="#fff"/><rect x="240" y="102.4" width="1" height="25.8" fill="#fff"/><rect x="240" y="124.2" width="1" height="6.1" fill="#ff4040"/><rect x="241" y="105.8" width="1" height="21.5" fill="#fff"/><rect x="241" y="123.3" width="1" height="5.1" fill="#ff4040"/><rect x="242" y="103.7" width="1" height="33.8" fill="#fff"/><rect x="243" y="102.2" width="1" height="30.4" fill="#fff"/><rect x="244" y="104.4" width="1" height="38.4" fill="#fff"/><rect x="244" y="138.8" width="1" height="9.6" fill="#ff4040"/><rect x="245" y="106.3" width="1" height="26.6" fill="#fff"/><rect x="246" y="106.5" width="1" height="34.6" fill="#fff"/><rect x="247" y="105.2" width="1" height="21.4" fill="#fff"/><rect x="248" y="106.0" width="1" height="28.9" fill="#fff"/><rect x="249" y="105.8" width="1" height="26.0" fill="#fff"/><rect x="250" y="101.9" width="1" height="25.4" fill="#fff"/><rect x="251" y="105.1" width="1" height="26.6" fill="#fff"/><rect x="252" y="101.9" width="1" height="28.4" fill="#fff"/><rect x="252" y="126.4" width="1" height="8.0" fill="#ff4040"/><rect x="253" y="102.7" width="1" height="23.0" fill="#fff"/><rect x="254" y="101.6" width="1" height="29.2" fill="#fff"/><rect x="255" y="102.3" width="1" height="29.2" fill="#fff"/><rect x="256" y="104.8" width="1" height="38.8" fill="#fff"/><rect x="257" y="105.9" width="1" height="24.0" fill="#fff"/><rect x="257" y="125.9" width="1" height="7.5" fill="#ff4040"/><rect x="258" y="105.7" width="1" height="23.4" fill="#fff"/><rect x="259" y="102.3" width="1" height="40.6" fill="#fff"/><rect x="260" y="103.1" width="1" height="21.6" fill="#fff"/><rect x="261" y="101.9" width="1" height="54.4" fill="#fff"/><rect x="262" y="105.5" width="1" height="30.5" fill="#fff"/><rect x="262" y="102.5" width="1" height="4" fill="#ff4040"/><rect x="263" y="105.6" width="1" height="35.7" fill="#fff"/><rect x="264" y="104.8" width="1" height="22.1" fill="#fff"/><rect x="265" y="102.5" width="1" height="40.4" fill="#fff"/><rect x="262" y="124" width="1" height="32" fill="#fff"/><rect x="245" y="124" width="1" height="26" fill="#ff4040"/><rect x="262" y="98" width="1" height="6" fill="#ff4040"/></svg>
<div class="a" style="left:430px;top:611px;width:5px;height:1px;background:#000"></div>
<div class="t" style="right:1219px;top:604.0px;font-size:12.4px;color:#000;"><span style="display:inline-block;transform:scaleX(0.85);transform-origin:right">1.0E-1</span></div>
<div class="a" style="left:430px;top:633px;width:5px;height:1px;background:#000"></div>
<div class="t" style="right:1219px;top:626.375px;font-size:12.4px;color:#000;"><span style="display:inline-block;transform:scaleX(0.85);transform-origin:right">1.0E-2</span></div>
<div class="a" style="left:430px;top:656px;width:5px;height:1px;background:#000"></div>
<div class="t" style="right:1219px;top:648.75px;font-size:12.4px;color:#000;"><span style="display:inline-block;transform:scaleX(0.85);transform-origin:right">1.0E-3</span></div>
<div class="a" style="left:430px;top:678px;width:5px;height:1px;background:#000"></div>
<div class="t" style="right:1219px;top:671.125px;font-size:12.4px;color:#000;"><span style="display:inline-block;transform:scaleX(0.85);transform-origin:right">1.0E-4</span></div>
<div class="a" style="left:430px;top:700px;width:5px;height:1px;background:#000"></div>
<div class="t" style="right:1219px;top:693.5px;font-size:12.4px;color:#000;"><span style="display:inline-block;transform:scaleX(0.85);transform-origin:right">1.0E-5</span></div>
<div class="a" style="left:430px;top:723px;width:5px;height:1px;background:#000"></div>
<div class="t" style="right:1219px;top:715.875px;font-size:12.4px;color:#000;"><span style="display:inline-block;transform:scaleX(0.85);transform-origin:right">1.0E-6</span></div>
<div class="a" style="left:430px;top:745px;width:5px;height:1px;background:#000"></div>
<div class="t" style="right:1219px;top:738.25px;font-size:12.4px;color:#000;"><span style="display:inline-block;transform:scaleX(0.85);transform-origin:right">1.0E-7</span></div>
<div class="a" style="left:430px;top:768px;width:5px;height:1px;background:#000"></div>
<div class="t" style="right:1219px;top:760.625px;font-size:12.4px;color:#000;"><span style="display:inline-block;transform:scaleX(0.85);transform-origin:right">1.0E-8</span></div>
<div class="a" style="left:430px;top:790px;width:5px;height:1px;background:#000"></div>
<div class="t" style="right:1219px;top:783.0px;font-size:12.4px;color:#000;"><span style="display:inline-block;transform:scaleX(0.85);transform-origin:right">1.0E-9</span></div>
<div class="a" style="left:436px;top:792px;width:1px;height:5px;background:#000"></div>
<div class="t" style="left:236px;width:400px;text-align:center;top:798.0px;font-size:12.4px;color:#000;"><span style="display:inline-block;transform:scaleX(0.85);transform-origin:center">99.0</span></div>
<div class="a" style="left:518px;top:792px;width:1px;height:5px;background:#000"></div>
<div class="t" style="left:317.6px;width:400px;text-align:center;top:798.0px;font-size:12.4px;color:#000;"><span style="display:inline-block;transform:scaleX(0.85);transform-origin:center">1000.0</span></div>
<div class="a" style="left:597px;top:792px;width:1px;height:5px;background:#000"></div>
<div class="t" style="left:397.4px;width:400px;text-align:center;top:798.0px;font-size:12.4px;color:#000;"><span style="display:inline-block;transform:scaleX(0.85);transform-origin:center">10000.0</span></div>
<div class="a" style="left:677px;top:792px;width:1px;height:5px;background:#000"></div>
<div class="t" style="left:477.20000000000005px;width:400px;text-align:center;top:798.0px;font-size:12.4px;color:#000;"><span style="display:inline-block;transform:scaleX(0.85);transform-origin:center">100000.0</span></div>
<div class="a" style="left:757px;top:792px;width:1px;height:5px;background:#000"></div>
<div class="t" style="left:557.0px;width:400px;text-align:center;top:798.0px;font-size:12.4px;color:#000;"><span style="display:inline-block;transform:scaleX(0.85);transform-origin:center">1000000.0</span></div>
<div class="t" style="left:284px;top:693px;width:200px;text-align:center;font-size:12.6px;transform:rotate(-90deg) scaleX(0.93)">Amplitude</div>
<div class="t" style="left:362px;top:810.5px;font-size:12.6px;color:#000;"><span style="display:inline-block;transform:scaleX(0.93);transform-origin:left">Response Magnitude Graph</span></div>
<div class="t" style="left:551px;top:815.0px;font-size:12.6px;color:#000;"><span style="display:inline-block;transform:scaleX(0.93);transform-origin:left">Frequency (Hz)</span></div>
<div class="a" style="left:788px;top:684px;width:90px;height:25px;background:linear-gradient(90deg,#b8b8b8 0%,#d6d6d6 8%,#cfcfcf 18%,#c4c4c4 80%,#a8a8a8 92%,#8c8c8c 100%);border-top:1px solid #dedede;border-bottom:2px solid #8e8e8e"></div>
<div class="a" style="left:802px;top:689px;width:20px;height:16px;background:#8e8e8e;border:1px solid;border-color:#5a5a5a #9a9a9a #9a9a9a #5a5a5a"></div>
<svg class="a" style="left:802px;top:689px" width="20" height="16"><rect x="2" y="2.5" width="3" height="3" fill="#40ff40"/><path d="M4.0,9.0 H16.0 M10.0,3.0 V15.0" stroke="#000" stroke-width="1.3"/><circle cx="10.0" cy="9.0" r="1.4" fill="#fff" stroke="#000" stroke-width="0.9"/></svg>
<div class="a" style="left:824px;top:689px;width:19px;height:16px;background:#c2c2c2;border:1px solid;border-color:#dcdcdc #8a8a8a #8a8a8a #dcdcdc"></div>
<svg class="a" style="left:824px;top:689px" width="19" height="16"><rect x="2" y="2.5" width="3" height="3" fill="#2a6a2a"/><circle cx="12.5" cy="6.0" r="3.8" fill="#dcdcf4" stroke="#000" stroke-width="1.1"/><path d="M12.5,3.8 V8.2 M10.3,6.0 H14.7" stroke="#000" stroke-width="1.1"/><path d="M9.5,9.0 L4.0,14.5" stroke="#000" stroke-width="2.4"/><path d="M9.5,9.0 L4.0,14.5" stroke="#ddd" stroke-width="0.8"/><path d="M12.0,12.5 H16.5 L14.25,15.0Z" fill="#000"/></svg>
<div class="a" style="left:845px;top:689px;width:19px;height:16px;background:#c2c2c2;border:1px solid;border-color:#dcdcdc #8a8a8a #8a8a8a #dcdcdc"></div>
<svg class="a" style="left:845px;top:689px" width="19" height="16"><rect x="2" y="2.5" width="3" height="3" fill="#2a6a2a"/><g transform="translate(3.0,0.5)" stroke-linecap="round"><path d="M5,9 V4 M7,8.5 V2.6 M9,8.5 V3 M11,9 V4.6 M4.2,11 L2,8" stroke="#000" stroke-width="2.6" fill="none"/><path d="M4,9 Q4,14.5 7.5,14.5 Q11.5,14.5 11.5,10 V8.5 H4Z" fill="#fff" stroke="#000" stroke-width="1"/><path d="M5,9.5 V4 M7,9.5 V2.6 M9,9.5 V3 M11,9.5 V4.6 M4.2,11 L2,8" stroke="#fff" stroke-width="0.9" fill="none"/></g></svg>
<div class="a" style="left:773px;top:601px;width:107px;height:91px;background:#c2c2c2;border-top:1px solid #d8d8d8;border-bottom:1px solid #9a9a9a"></div>
<div class="a" style="left:773px;top:601px;width:11px;height:91px;background:linear-gradient(90deg,#a8a8a8,#d6d6d6 50%,#c6c6c6)"></div>
<div class="a" style="left:868px;top:601px;width:12px;height:91px;background:linear-gradient(90deg,#c2c2c2,#aaaaaa 55%,#8c8c8c 80%,#6e6e6e)"></div>
<div class="t" style="left:789.5px;top:604.7px;font-size:12.6px;color:#000;"><span style="display:inline-block;transform:scaleX(0.93);transform-origin:left">Chan 0</span></div>
<svg class="a" style="left:838px;top:603px" width="27" height="18"><rect width="27" height="18" fill="#000"/><rect x="0" y="17" width="27" height="1" fill="#d8d8d8"/><rect x="26" y="0" width="1" height="18" fill="#d8d8d8"/><path d="M1.5,13.5 L12,2.5 L22.5,13.5 L25.5,10" stroke="#fff" stroke-width="1" fill="none"/></svg>
<div class="t" style="left:789.5px;top:627.6px;font-size:12.6px;color:#000;"><span style="display:inline-block;transform:scaleX(0.93);transform-origin:left">Chan 1</span></div>
<svg class="a" style="left:838px;top:626px" width="27" height="18"><rect width="27" height="18" fill="#000"/><rect x="0" y="17" width="27" height="1" fill="#d8d8d8"/><rect x="26" y="0" width="1" height="18" fill="#d8d8d8"/><path d="M1.5,13.5 L12,2.5 L22.5,13.5 L25.5,10" stroke="#ff3030" stroke-width="1" fill="none"/></svg>
<div class="t" style="left:789.5px;top:650.5px;font-size:12.6px;color:#000;"><span style="display:inline-block;transform:scaleX(0.93);transform-origin:left">Chan 2</span></div>
<svg class="a" style="left:838px;top:648px" width="27" height="18"><rect width="27" height="18" fill="#000"/><rect x="0" y="17" width="27" height="1" fill="#d8d8d8"/><rect x="26" y="0" width="1" height="18" fill="#d8d8d8"/><path d="M1.5,13.5 L10,3 L18.5,13.5 L25.5,3.5" stroke="#20f020" stroke-width="1" fill="none"/></svg>
<div class="t" style="left:789.5px;top:673.4000000000001px;font-size:12.6px;color:#000;"><span style="display:inline-block;transform:scaleX(0.93);transform-origin:left">Chan 3</span></div>
<svg class="a" style="left:838px;top:671px" width="27" height="18"><rect width="27" height="18" fill="#000"/><rect x="0" y="17" width="27" height="1" fill="#d8d8d8"/><rect x="26" y="0" width="1" height="18" fill="#d8d8d8"/><path d="M1.5,13.5 L10,3 L18.5,13.5 L25.5,3.5" stroke="#30a0ff" stroke-width="1" fill="none"/></svg>
<div class="a" style="left:355px;top:829px;width:427px;height:187px;background:#bfbfbf;border-top:2px solid #d4d4d4;border-bottom:2px solid #8c8c8c"></div>
<div class="a" style="left:355px;top:831px;width:13px;height:183px;background:linear-gradient(90deg,#b4b4b4,#d6d6d6 40%,#cdcdcd 75%,#c2c2c2 100%)"></div>
<div class="a" style="left:772px;top:829px;width:10px;height:187px;background:linear-gradient(90deg,#bfbfbf,#a8a8a8 60%,#8e8e8e 90%,#3c3c3c 100%)"></div>
<svg class="a" style="left:438px;top:839px" width="319" height="139" shape-rendering="crispEdges"><rect width="319" height="139" fill="#000"/><line x1="0" y1="5.5" x2="319" y2="5.5" stroke="#003e00"/><line x1="0" y1="10.5" x2="319" y2="10.5" stroke="#003e00"/><line x1="0" y1="15.5" x2="319" y2="15.5" stroke="#003e00"/><line x1="0" y1="25.5" x2="319" y2="25.5" stroke="#003e00"/><line x1="0" y1="30.5" x2="319" y2="30.5" stroke="#003e00"/><line x1="0" y1="35.5" x2="319" y2="35.5" stroke="#003e00"/><line x1="0" y1="44.5" x2="319" y2="44.5" stroke="#003e00"/><line x1="0" y1="49.5" x2="319" y2="49.5" stroke="#003e00"/><line x1="0" y1="54.5" x2="319" y2="54.5" stroke="#003e00"/><line x1="0" y1="64.5" x2="319" y2="64.5" stroke="#003e00"/><line x1="0" y1="69.5" x2="319" y2="69.5" stroke="#003e00"/><line x1="0" y1="74.5" x2="319" y2="74.5" stroke="#003e00"/><line x1="0" y1="83.5" x2="319" y2="83.5" stroke="#003e00"/><line x1="0" y1="88.5" x2="319" y2="88.5" stroke="#003e00"/><line x1="0" y1="93.5" x2="319" y2="93.5" stroke="#003e00"/><line x1="0" y1="103.5" x2="319" y2="103.5" stroke="#003e00"/><line x1="0" y1="108.5" x2="319" y2="108.5" stroke="#003e00"/><line x1="0" y1="113.5" x2="319" y2="113.5" stroke="#003e00"/><line x1="0" y1="123.5" x2="319" y2="123.5" stroke="#003e00"/><line x1="0" y1="127.5" x2="319" y2="127.5" stroke="#003e00"/><line x1="0" y1="132.5" x2="319" y2="132.5" stroke="#003e00"/><line x1="26.5" y1="0" x2="26.5" y2="139" stroke="#003e00"/><line x1="40.5" y1="0" x2="40.5" y2="139" stroke="#003e00"/><line x1="49.5" y1="0" x2="49.5" y2="139" stroke="#003e00"/><line x1="57.5" y1="0" x2="57.5" y2="139" stroke="#003e00"/><line x1="63.5" y1="0" x2="63.5" y2="139" stroke="#003e00"/><line x1="69.5" y1="0" x2="69.5" y2="139" stroke="#003e00"/><line x1="73.5" y1="0" x2="73.5" y2="139" stroke="#003e00"/><line x1="77.5" y1="0" x2="77.5" y2="139" stroke="#003e00"/><line x1="105.5" y1="0" x2="105.5" y2="139" stroke="#003e00"/><line x1="119.5" y1="0" x2="119.5" y2="139" stroke="#003e00"/><line x1="129.5" y1="0" x2="129.5" y2="139" stroke="#003e00"/><line x1="136.5" y1="0" x2="136.5" y2="139" stroke="#003e00"/><line x1="143.5" y1="0" x2="143.5" y2="139" stroke="#003e00"/><line x1="148.5" y1="0" x2="148.5" y2="139" stroke="#003e00"/><line x1="153.5" y1="0" x2="153.5" y2="139" stroke="#003e00"/><line x1="157.5" y1="0" x2="157.5" y2="139" stroke="#003e00"/><line x1="184.5" y1="0" x2="184.5" y2="139" stroke="#003e00"/><line x1="198.5" y1="0" x2="198.5" y2="139" stroke="#003e00"/><line x1="208.5" y1="0" x2="208.5" y2="139" stroke="#003e00"/><line x1="216.5" y1="0" x2="216.5" y2="139" stroke="#003e00"/><line x1="222.5" y1="0" x2="222.5" y2="139" stroke="#003e00"/><line x1="227.5" y1="0" x2="227.5" y2="139" stroke="#003e00"/><line x1="232.5" y1="0" x2="232.5" y2="139" stroke="#003e00"/><line x1="236.5" y1="0" x2="236.5" y2="139" stroke="#003e00"/><line x1="263.5" y1="0" x2="263.5" y2="139" stroke="#003e00"/><line x1="277.5" y1="0" x2="277.5" y2="139" stroke="#003e00"/><line x1="287.5" y1="0" x2="287.5" y2="139" stroke="#003e00"/><line x1="295.5" y1="0" x2="295.5" y2="139" stroke="#003e00"/><line x1="301.5" y1="0" x2="301.5" y2="139" stroke="#003e00"/><line x1="306.5" y1="0" x2="306.5" y2="139" stroke="#003e00"/><line x1="311.5" y1="0" x2="311.5" y2="139" stroke="#003e00"/><line x1="315.5" y1="0" x2="315.5" y2="139" stroke="#003e00"/><line x1="0" y1="20.5" x2="319" y2="20.5" stroke="#006a00"/><line x1="0" y1="40.5" x2="319" y2="40.5" stroke="#006a00"/><line x1="0" y1="59.5" x2="319" y2="59.5" stroke="#006a00"/><line x1="0" y1="79.5" x2="319" y2="79.5" stroke="#006a00"/><line x1="0" y1="98.5" x2="319" y2="98.5" stroke="#006a00"/><line x1="0" y1="118.5" x2="319" y2="118.5" stroke="#006a00"/><line x1="0" y1="137.5" x2="319" y2="137.5" stroke="#006a00"/><line x1="2.5" y1="0" x2="2.5" y2="139" stroke="#006a00"/><line x1="81.5" y1="0" x2="81.5" y2="139" stroke="#006a00"/><line x1="160.5" y1="0" x2="160.5" y2="139" stroke="#006a00"/><line x1="239.5" y1="0" x2="239.5" y2="139" stroke="#006a00"/></svg>
<div class="a" style="left:437px;top:838px;width:320px;height:1px;background:#6a6a6a"></div>
<div class="a" style="left:437px;top:838px;width:1px;height:140px;background:#6a6a6a"></div>
<div class="a" style="left:437px;top:978px;width:321px;height:1px;background:#e4e4e4"></div>
<div class="a" style="left:757px;top:838px;width:1px;height:141px;background:#e4e4e4"></div>
<svg class="a" style="left:438px;top:839px" width="319" height="139"><path d="M0.0,118.3 L1.5,118.3 L3.0,118.4 L4.5,118.4 L6.0,118.4 L7.5,118.5 L9.0,118.5 L10.5,118.6 L12.0,118.6 L13.5,118.7 L15.0,118.7 L16.5,118.8 L18.0,118.8 L19.5,118.9 L21.0,119.0 L22.5,119.0 L24.0,119.1 L25.5,119.2 L27.0,119.3 L28.5,119.3 L30.0,119.4 L31.5,119.5 L33.0,119.6 L34.5,119.7 L36.0,119.8 L37.5,119.9 L39.0,120.0 L40.5,120.2 L42.0,120.3 L43.5,120.4 L45.0,120.6 L46.5,120.7 L48.0,120.8 L49.5,120.9 L51.0,121.0 L52.5,121.0 L54.0,121.0 L55.5,121.1 L57.0,121.1 L58.5,121.1 L60.0,121.2 L61.5,121.2 L63.0,121.2 L64.5,121.2 L66.0,121.2 L67.5,121.2 L69.0,121.0 L70.5,120.9 L72.0,120.6 L73.5,120.4 L75.0,120.1 L76.5,119.8 L78.0,119.5 L79.5,119.2 L81.0,119.0 L82.5,118.7 L84.0,118.5 L85.5,118.3 L87.0,118.1 L88.5,117.8 L90.0,117.6 L91.5,117.4 L93.0,117.2 L94.5,117.0 L96.0,116.8 L97.5,116.6 L99.0,116.4 L100.5,116.1 L102.0,115.9 L103.5,115.7 L105.0,115.4 L106.5,115.1 L108.0,114.9 L109.5,114.6 L111.0,114.3 L112.5,114.0 L114.0,113.6 L115.5,113.3 L117.0,112.9 L118.5,112.4 L120.0,112.0 L121.5,111.5 L123.0,110.9 L124.5,110.4 L126.0,109.8 L127.5,109.2 L129.0,108.6 L130.5,107.9 L132.0,107.2 L133.5,106.6 L135.0,105.9 L136.5,105.2 L138.0,104.5 L139.5,103.7 L141.0,103.0 L142.5,102.3 L144.0,101.6 L145.5,100.8 L147.0,100.1 L148.5,99.4 L150.0,98.6 L151.5,97.8 L153.0,97.0 L154.5,96.2 L156.0,95.4 L157.5,94.5 L159.0,93.6 L160.5,92.8 L162.0,91.9 L163.5,91.0 L165.0,90.1 L166.5,89.2 L168.0,88.3 L169.5,87.4 L171.0,86.5 L172.5,85.6 L174.0,84.7 L175.5,83.8 L177.0,82.9 L178.5,82.0 L180.0,81.0 L181.5,80.0 L183.0,79.1 L184.5,78.1 L186.0,77.1 L187.5,76.2 L189.0,75.3 L190.5,74.4 L192.0,73.6 L193.5,72.8 L195.0,72.0 L196.5,71.3 L198.0,70.7 L199.5,70.1 L201.0,69.5 L202.5,68.9 L204.0,68.3 L205.5,67.8 L207.0,67.3 L208.5,66.8 L210.0,66.3 L211.5,65.8 L213.0,65.3 L214.5,64.8 L216.0,64.4 L217.5,63.9 L219.0,63.5 L220.5,63.1 L222.0,62.7 L221.5,61.7 L223.0,65.2 L224.5,62.7 L226.5,63.3 L228.0,61.9 L230.0,57.9 L232.0,55.9 L234.0,56.2 L236.0,54.9 L238.0,51.2 L240.0,52.2 L241.5,49.9 L244.0,48.3 L246.0,47.9 L248.0,47.1 L251.5,45.4 L254.0,44.2 L256.0,43.0 L258.0,39.2 L260.0,38.4 L262.0,35.8 L263.5,34.7" stroke="#ff4040" stroke-width="1.8" fill="none"/><path d="M0.0,117.5 L1.5,117.5 L3.0,117.6 L4.5,117.6 L6.0,117.6 L7.5,117.7 L9.0,117.7 L10.5,117.8 L12.0,117.8 L13.5,117.9 L15.0,117.9 L16.5,118.0 L18.0,118.0 L19.5,118.1 L21.0,118.2 L22.5,118.2 L24.0,118.3 L25.5,118.4 L27.0,118.5 L28.5,118.5 L30.0,118.6 L31.5,118.7 L33.0,118.8 L34.5,118.9 L36.0,119.0 L37.5,119.1 L39.0,119.2 L40.5,119.4 L42.0,119.5 L43.5,119.6 L45.0,119.8 L46.5,119.9 L48.0,120.0 L49.5,120.1 L51.0,120.2 L52.5,120.2 L54.0,120.2 L55.5,120.3 L57.0,120.3 L58.5,120.3 L60.0,120.4 L61.5,120.4 L63.0,120.4 L64.5,120.4 L66.0,120.4 L67.5,120.4 L69.0,120.2 L70.5,120.1 L72.0,119.8 L73.5,119.6 L75.0,119.3 L76.5,119.0 L78.0,118.7 L79.5,118.4 L81.0,118.2 L82.5,117.9 L84.0,117.7 L85.5,117.5 L87.0,117.3 L88.5,117.0 L90.0,116.8 L91.5,116.6 L93.0,116.4 L94.5,116.2 L96.0,116.0 L97.5,115.8 L99.0,115.6 L100.5,115.3 L102.0,115.1 L103.5,114.9 L105.0,114.6 L106.5,114.3 L108.0,114.1 L109.5,113.8 L111.0,113.5 L112.5,113.2 L114.0,112.8 L115.5,112.5 L117.0,112.1 L118.5,111.6 L120.0,111.2 L121.5,110.7 L123.0,110.1 L124.5,109.6 L126.0,109.0 L127.5,108.4 L129.0,107.8 L130.5,107.1 L132.0,106.4 L133.5,105.8 L135.0,105.1 L136.5,104.4 L138.0,103.7 L139.5,102.9 L141.0,102.2 L142.5,101.5 L144.0,100.8 L145.5,100.0 L147.0,99.3 L148.5,98.6 L150.0,97.8 L151.5,97.0 L153.0,96.2 L154.5,95.4 L156.0,94.6 L157.5,93.7 L159.0,92.8 L160.5,92.0 L162.0,91.1 L163.5,90.2 L165.0,89.3 L166.5,88.4 L168.0,87.5 L169.5,86.6 L171.0,85.7 L172.5,84.8 L174.0,83.9 L175.5,83.0 L177.0,82.1 L178.5,81.2 L180.0,80.2 L181.5,79.2 L183.0,78.3 L184.5,77.3 L186.0,76.3 L187.5,75.4 L189.0,74.5 L190.5,73.6 L192.0,72.8 L193.5,72.0 L195.0,71.2 L196.5,70.5 L198.0,69.9 L199.5,69.3 L201.0,68.7 L202.5,68.1 L204.0,67.5 L205.5,67.0 L207.0,66.5 L208.5,66.0 L210.0,65.5 L211.5,65.0 L213.0,64.5 L214.5,64.0 L216.0,63.6 L217.5,63.1 L219.0,62.7 L220.5,62.3 L222.0,61.9 L221.5,62.2 L224.0,60.5 L226.0,54.6 L228.0,49.9 L230.0,47.5 L232.0,47.3 L234.0,45.1 L236.0,46.9 L238.0,49.4 L239.0,49.3 L241.0,46.8 L243.0,43.2 L245.0,40.9 L247.0,37.5 L249.0,36.1 L251.0,34.1 L253.0,31.0 L255.0,26.4 L257.0,22.6 L259.0,19.8 L261.0,14.5 L262.0,10.3 L263.5,9.1" stroke="#fff" stroke-width="1.3" fill="none"/></svg>
<div class="a" style="left:432px;top:839px;width:5px;height:1px;background:#000"></div>
<div class="t" style="right:1217px;top:832.4px;font-size:12.4px;color:#000;"><span style="display:inline-block;transform:scaleX(0.85);transform-origin:right">120.00</span></div>
<div class="a" style="left:432px;top:859px;width:5px;height:1px;background:#000"></div>
<div class="t" style="right:1217px;top:851.9499999999999px;font-size:12.4px;color:#000;"><span style="display:inline-block;transform:scaleX(0.85);transform-origin:right">100.00</span></div>
<div class="a" style="left:432px;top:878px;width:5px;height:1px;background:#000"></div>
<div class="t" style="right:1217px;top:871.5px;font-size:12.4px;color:#000;"><span style="display:inline-block;transform:scaleX(0.85);transform-origin:right">80.00</span></div>
<div class="a" style="left:432px;top:898px;width:5px;height:1px;background:#000"></div>
<div class="t" style="right:1217px;top:891.05px;font-size:12.4px;color:#000;"><span style="display:inline-block;transform:scaleX(0.85);transform-origin:right">60.00</span></div>
<div class="a" style="left:432px;top:918px;width:5px;height:1px;background:#000"></div>
<div class="t" style="right:1217px;top:910.6px;font-size:12.4px;color:#000;"><span style="display:inline-block;transform:scaleX(0.85);transform-origin:right">40.00</span></div>
<div class="a" style="left:432px;top:937px;width:5px;height:1px;background:#000"></div>
<div class="t" style="right:1217px;top:930.15px;font-size:12.4px;color:#000;"><span style="display:inline-block;transform:scaleX(0.85);transform-origin:right">20.00</span></div>
<div class="a" style="left:432px;top:957px;width:5px;height:1px;background:#000"></div>
<div class="t" style="right:1217px;top:949.7px;font-size:12.4px;color:#000;"><span style="display:inline-block;transform:scaleX(0.85);transform-origin:right">0.00</span></div>
<div class="a" style="left:432px;top:976px;width:5px;height:1px;background:#000"></div>
<div class="t" style="right:1217px;top:969.25px;font-size:12.4px;color:#000;"><span style="display:inline-block;transform:scaleX(0.85);transform-origin:right">-20.00</span></div>
<div class="a" style="left:439px;top:979px;width:1px;height:5px;background:#000"></div>
<div class="t" style="left:239px;width:400px;text-align:center;top:984.0px;font-size:12.4px;color:#000;"><span style="display:inline-block;transform:scaleX(0.85);transform-origin:center">99.0</span></div>
<div class="a" style="left:520px;top:979px;width:1px;height:5px;background:#000"></div>
<div class="t" style="left:319.5px;width:400px;text-align:center;top:984.0px;font-size:12.4px;color:#000;"><span style="display:inline-block;transform:scaleX(0.85);transform-origin:center">1000.0</span></div>
<div class="a" style="left:599px;top:979px;width:1px;height:5px;background:#000"></div>
<div class="t" style="left:398.70000000000005px;width:400px;text-align:center;top:984.0px;font-size:12.4px;color:#000;"><span style="display:inline-block;transform:scaleX(0.85);transform-origin:center">10000.0</span></div>
<div class="a" style="left:678px;top:979px;width:1px;height:5px;background:#000"></div>
<div class="t" style="left:477.9px;width:400px;text-align:center;top:984.0px;font-size:12.4px;color:#000;"><span style="display:inline-block;transform:scaleX(0.85);transform-origin:center">100000.0</span></div>
<div class="a" style="left:757px;top:979px;width:1px;height:5px;background:#000"></div>
<div class="t" style="left:557.1px;width:400px;text-align:center;top:984.0px;font-size:12.4px;color:#000;"><span style="display:inline-block;transform:scaleX(0.85);transform-origin:center">1000000.0</span></div>
<div class="t" style="left:287px;top:900px;width:200px;text-align:center;font-size:12.6px;transform:rotate(-90deg) scaleX(0.93)">Phase (periods)</div>
<div class="t" style="left:360px;top:997.5px;font-size:12.6px;color:#000;"><span style="display:inline-block;transform:scaleX(0.93);transform-origin:left">Response Phase Graph</span></div>
<div class="t" style="left:553px;top:1001.5px;font-size:12.6px;color:#000;"><span style="display:inline-block;transform:scaleX(0.93);transform-origin:left">Frequency (Hz)</span></div>
<div class="a" style="left:763px;top:824px;width:107px;height:90px;background:#c2c2c2;border-top:1px solid #d8d8d8;border-bottom:1px solid #9a9a9a"></div>
<div class="a" style="left:763px;top:824px;width:11px;height:90px;background:linear-gradient(90deg,#a8a8a8,#d6d6d6 50%,#c6c6c6)"></div>
<div class="a" style="left:858px;top:824px;width:12px;height:90px;background:linear-gradient(90deg,#c2c2c2,#aaaaaa 55%,#8c8c8c 80%,#6e6e6e)"></div>
<div class="t" style="left:777px;top:827.0px;font-size:12.6px;color:#000;"><span style="display:inline-block;transform:scaleX(0.93);transform-origin:left">Chan 0</span></div>
<svg class="a" style="left:826px;top:825px" width="29" height="18"><rect width="29" height="18" fill="#000"/><rect x="0" y="17" width="29" height="1" fill="#d8d8d8"/><rect x="28" y="0" width="1" height="18" fill="#d8d8d8"/><path d="M1.5,13.5 L12,2.5 L22.5,13.5 L25.5,10" stroke="#fff" stroke-width="1" fill="none"/></svg>
<div class="t" style="left:777px;top:850.0px;font-size:12.6px;color:#000;"><span style="display:inline-block;transform:scaleX(0.93);transform-origin:left">Chan 1</span></div>
<svg class="a" style="left:826px;top:848px" width="29" height="18"><rect width="29" height="18" fill="#000"/><rect x="0" y="17" width="29" height="1" fill="#d8d8d8"/><rect x="28" y="0" width="1" height="18" fill="#d8d8d8"/><path d="M1.5,13.5 L12,2.5 L22.5,13.5 L25.5,10" stroke="#ff3030" stroke-width="1" fill="none"/></svg>
<div class="t" style="left:777px;top:873.0px;font-size:12.6px;color:#000;"><span style="display:inline-block;transform:scaleX(0.93);transform-origin:left">Chan 2</span></div>
<svg class="a" style="left:826px;top:871px" width="29" height="18"><rect width="29" height="18" fill="#000"/><rect x="0" y="17" width="29" height="1" fill="#d8d8d8"/><rect x="28" y="0" width="1" height="18" fill="#d8d8d8"/><path d="M1.5,13.5 L10,3 L18.5,13.5 L25.5,3.5" stroke="#20f020" stroke-width="1" fill="none"/></svg>
<div class="t" style="left:777px;top:896.0px;font-size:12.6px;color:#000;"><span style="display:inline-block;transform:scaleX(0.93);transform-origin:left">Chan 3</span></div>
<svg class="a" style="left:826px;top:894px" width="29" height="18"><rect width="29" height="18" fill="#000"/><rect x="0" y="17" width="29" height="1" fill="#d8d8d8"/><rect x="28" y="0" width="1" height="18" fill="#d8d8d8"/><path d="M1.5,13.5 L10,3 L18.5,13.5 L25.5,3.5" stroke="#30a0ff" stroke-width="1" fill="none"/></svg>
<div class="a" style="left:784px;top:914px;width:86px;height:22px;background:linear-gradient(90deg,#b8b8b8 0%,#d6d6d6 8%,#cfcfcf 18%,#c4c4c4 80%,#a8a8a8 92%,#8c8c8c 100%);border-top:1px solid #dedede;border-bottom:2px solid #8e8e8e"></div>
<div class="a" style="left:796px;top:916px;width:20px;height:16px;background:#8e8e8e;border:1px solid;border-color:#5a5a5a #9a9a9a #9a9a9a #5a5a5a"></div>
<svg class="a" style="left:796px;top:916px" width="20" height="16"><rect x="2" y="2.5" width="3" height="3" fill="#40ff40"/><path d="M4.0,9.0 H16.0 M10.0,3.0 V15.0" stroke="#000" stroke-width="1.3"/><circle cx="10.0" cy="9.0" r="1.4" fill="#fff" stroke="#000" stroke-width="0.9"/></svg>
<div class="a" style="left:818px;top:916px;width:20px;height:16px;background:#c2c2c2;border:1px solid;border-color:#dcdcdc #8a8a8a #8a8a8a #dcdcdc"></div>
<svg class="a" style="left:818px;top:916px" width="20" height="16"><rect x="2" y="2.5" width="3" height="3" fill="#2a6a2a"/><circle cx="13.0" cy="6.0" r="3.8" fill="#dcdcf4" stroke="#000" stroke-width="1.1"/><path d="M13.0,3.8 V8.2 M10.8,6.0 H15.2" stroke="#000" stroke-width="1.1"/><path d="M10.0,9.0 L4.5,14.5" stroke="#000" stroke-width="2.4"/><path d="M10.0,9.0 L4.5,14.5" stroke="#ddd" stroke-width="0.8"/><path d="M12.5,12.5 H17.0 L14.75,15.0Z" fill="#000"/></svg>
<div class="a" style="left:840px;top:916px;width:18px;height:16px;background:#c2c2c2;border:1px solid;border-color:#dcdcdc #8a8a8a #8a8a8a #dcdcdc"></div>
<svg class="a" style="left:840px;top:916px" width="18" height="16"><rect x="2" y="2.5" width="3" height="3" fill="#2a6a2a"/><g transform="translate(2.5,0.5)" stroke-linecap="round"><path d="M5,9 V4 M7,8.5 V2.6 M9,8.5 V3 M11,9 V4.6 M4.2,11 L2,8" stroke="#000" stroke-width="2.6" fill="none"/><path d="M4,9 Q4,14.5 7.5,14.5 Q11.5,14.5 11.5,10 V8.5 H4Z" fill="#fff" stroke="#000" stroke-width="1"/><path d="M5,9.5 V4 M7,9.5 V2.6 M9,9.5 V3 M11,9.5 V4.6 M4.2,11 L2,8" stroke="#fff" stroke-width="0.9" fill="none"/></g></svg>
</body></html>
